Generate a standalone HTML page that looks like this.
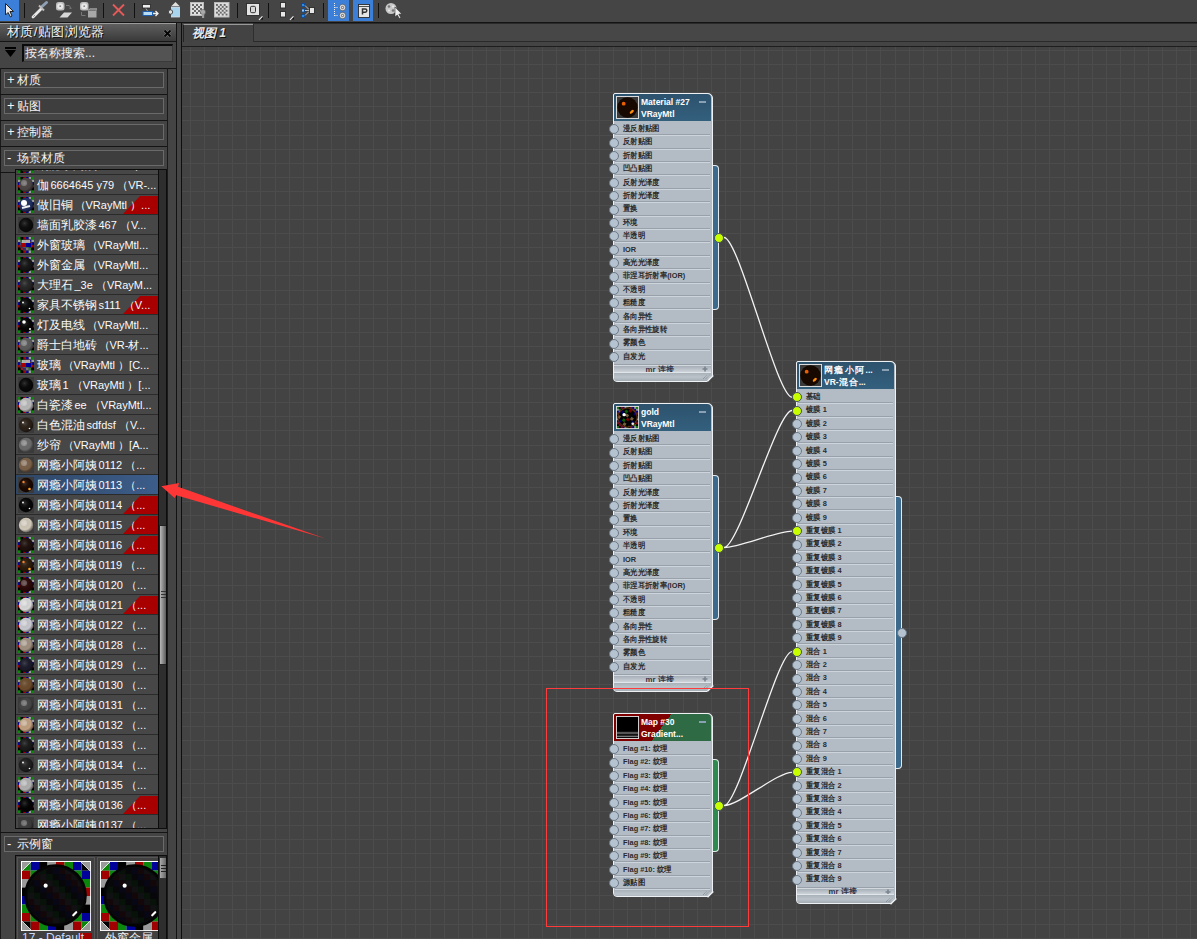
<!DOCTYPE html><html><head><meta charset="utf-8"><style>
*{box-sizing:border-box;margin:0;padding:0}
html,body{width:1197px;height:939px;overflow:hidden;background:#444;font-family:"Liberation Sans",sans-serif}
.a{position:absolute}
.row{position:absolute;left:0;width:142px;height:19px;background:#474747;color:#fafafa;font-size:12px;line-height:19px;white-space:nowrap;overflow:hidden}
.row .t{position:absolute;left:21px;top:1px}
.sec{position:absolute;left:1px;width:166px;height:25px;background:#444}
.secbox{position:absolute;left:3px;top:3px;width:160px;height:16px;border:1px solid #6a6a6a;background:#3e3e3e;color:#f4f4f4;font-size:12px;line-height:14px;white-space:nowrap}
.lb{position:absolute;left:9px;transform:scaleX(0.92);transform-origin:0 50%;font-size:8px;font-weight:bold;color:#2a2a2a;white-space:nowrap}
.sk{position:absolute;width:10px;height:10px;border-radius:50%;background:#b5c2cf;border:1px solid #6b7987}
.sky{position:absolute;width:10px;height:10px;border-radius:50%;background:#c8ff00;border:1px solid #46525c}
</style></head><body>

<svg width="0" height="0" style="position:absolute"><defs><radialGradient id="shade" cx="0.4" cy="0.38" r="0.62"><stop offset="0" stop-color="#fff" stop-opacity="0.18"/><stop offset="0.7" stop-color="#000" stop-opacity="0"/><stop offset="1" stop-color="#000" stop-opacity="0.45"/></radialGradient></defs></svg>
<div class="a" style="left:0;top:0;width:1197px;height:22px;background:#454545"></div>
<div class="a" style="left:0;top:22px;width:1197px;height:1px;background:#141414"></div>
<div class="a" style="left:0px;top:0;width:19px;height:21px;background:#3c7fd8"></div>
<div class="a" style="left:328px;top:0;width:21px;height:21px;background:#3c7fd8"></div>
<div class="a" style="left:353px;top:0;width:20px;height:21px;background:#3c7fd8"></div>
<div class="a" style="left:24px;top:3px;width:1px;height:15px;background:#111"></div>
<div class="a" style="left:103px;top:3px;width:1px;height:15px;background:#111"></div>
<div class="a" style="left:134px;top:3px;width:1px;height:15px;background:#111"></div>
<div class="a" style="left:237px;top:3px;width:1px;height:15px;background:#111"></div>
<div class="a" style="left:268px;top:3px;width:1px;height:15px;background:#111"></div>
<div class="a" style="left:323px;top:3px;width:1px;height:15px;background:#111"></div>
<div class="a" style="left:378px;top:3px;width:1px;height:15px;background:#111"></div>
<svg class="a" style="left:0;top:0" width="420" height="22">
 <path d="M5.5 3.5 L5.5 15 L8 12.5 L10.5 17 L12 16 L10 11.5 L13.5 11.5 Z" fill="#e8e8e8" stroke="#222" stroke-width="1"/>
 <path d="M33 17 L41 9" stroke="#e8e8e8" stroke-width="2.8" stroke-linecap="round"/>
 <path d="M33.3 16.7 L35 15" stroke="#999" stroke-width="1"/>
 <path d="M42 6.5 L46.5 2.5" stroke="#8fa0b5" stroke-width="3" stroke-linecap="round"/>
 <path d="M39 5.5 L44 10.5" stroke="#bdbdbd" stroke-width="2"/>
 <rect x="56" y="2" width="8.5" height="8.5" rx="2.5" fill="#bdbdbd"/><circle cx="60.2" cy="6.2" r="3" fill="#e8e8e8"/><circle cx="60.2" cy="6.2" r="0.9" fill="#888"/>
 <rect x="80" y="2" width="8.5" height="8.5" rx="2.5" fill="#bdbdbd"/><circle cx="84.2" cy="6.2" r="3" fill="#e8e8e8"/><circle cx="84.2" cy="6.2" r="0.9" fill="#888"/>
 <path d="M59.5 17.5 L64 12.5 L72 12.5 L67.5 17.5 Z" fill="#d8d8d8"/>
 <path d="M66 5.5 L69 5.5 Q70.5 6 70.5 8.5 M69.3 7.8 L70.5 9 L71.7 7.8" stroke="#777" fill="none" stroke-width="1"/>
 <path d="M88 10.5 L95.5 10.5 L96.5 9.5 L96.5 17.5 L88 17.5 Z" fill="#a8a8a8"/>
 <path d="M88 10.5 L89.5 9 L97 9" stroke="#cfcfcf" fill="none"/>
 <path d="M81.5 12 L81.5 15.5 L85.5 15.5" stroke="#777" fill="none" stroke-width="1"/>
 <path d="M113 4.5 L124 15.5 M124 4.5 L113 15.5" stroke="#e85a5a" stroke-width="1.8"/>
 <rect x="142.5" y="4.5" width="8" height="3.5" fill="#eee" stroke="#222" stroke-width="0.8"/>
 <path d="M146 8.5 L147.5 11" stroke="#bbb" stroke-width="0.8"/>
 <rect x="143" y="11.5" width="9.5" height="4" fill="#b8dcf4" stroke="#1d5fb0" stroke-width="1"/>
 <path d="M153 13.5 L157.5 13.5 M155.5 11 L158 13.5 L155.5 16" stroke="#f0f0f0" stroke-width="1.3" fill="none"/>
 <path d="M171.5 6 L175.5 2 L179.5 6 Z" fill="#e0e0e0"/>
 <rect x="171.5" y="7" width="8" height="10" fill="#a8d4ee" stroke="#ddd" stroke-width="0.8"/>
 <circle cx="170.5" cy="12" r="2.2" fill="#ddd" stroke="#333" stroke-width="0.8"/>
<rect x="190.5" y="2.5" width="13" height="13" fill="#ddd" stroke="#bbb"/><rect x="192" y="4" width="10" height="10" fill="#e0e0e0"/><rect x="192" y="4" width="2" height="2" fill="#6a6a6a"/><rect x="196" y="4" width="2" height="2" fill="#6a6a6a"/><rect x="200" y="4" width="2" height="2" fill="#6a6a6a"/><rect x="194" y="6" width="2" height="2" fill="#6a6a6a"/><rect x="198" y="6" width="2" height="2" fill="#6a6a6a"/><rect x="192" y="8" width="2" height="2" fill="#6a6a6a"/><rect x="196" y="8" width="2" height="2" fill="#6a6a6a"/><rect x="200" y="8" width="2" height="2" fill="#6a6a6a"/><rect x="194" y="10" width="2" height="2" fill="#6a6a6a"/><rect x="198" y="10" width="2" height="2" fill="#6a6a6a"/><rect x="192" y="12" width="2" height="2" fill="#6a6a6a"/><rect x="196" y="12" width="2" height="2" fill="#6a6a6a"/><rect x="200" y="12" width="2" height="2" fill="#6a6a6a"/><circle cx="203" cy="12" r="2.6" fill="#aaa" stroke="#555" stroke-width="0.5"/><rect x="202" y="13.5" width="2.2" height="4.5" fill="#999"/><rect x="214.5" y="2.5" width="14.5" height="14.5" fill="#ddd" stroke="#bbb"/><rect x="216" y="4" width="11.52" height="11.52" fill="#e0e0e0"/><rect x="216.0" y="4.0" width="1.92" height="1.92" fill="#6a6a6a"/><rect x="219.84" y="4.0" width="1.92" height="1.92" fill="#6a6a6a"/><rect x="223.68" y="4.0" width="1.92" height="1.92" fill="#6a6a6a"/><rect x="217.92" y="5.92" width="1.92" height="1.92" fill="#6a6a6a"/><rect x="221.76" y="5.92" width="1.92" height="1.92" fill="#6a6a6a"/><rect x="225.6" y="5.92" width="1.92" height="1.92" fill="#6a6a6a"/><rect x="216.0" y="7.84" width="1.92" height="1.92" fill="#6a6a6a"/><rect x="219.84" y="7.84" width="1.92" height="1.92" fill="#6a6a6a"/><rect x="223.68" y="7.84" width="1.92" height="1.92" fill="#6a6a6a"/><rect x="217.92" y="9.76" width="1.92" height="1.92" fill="#6a6a6a"/><rect x="221.76" y="9.76" width="1.92" height="1.92" fill="#6a6a6a"/><rect x="225.6" y="9.76" width="1.92" height="1.92" fill="#6a6a6a"/><rect x="216.0" y="11.68" width="1.92" height="1.92" fill="#6a6a6a"/><rect x="219.84" y="11.68" width="1.92" height="1.92" fill="#6a6a6a"/><rect x="223.68" y="11.68" width="1.92" height="1.92" fill="#6a6a6a"/><rect x="217.92" y="13.6" width="1.92" height="1.92" fill="#6a6a6a"/><rect x="221.76" y="13.6" width="1.92" height="1.92" fill="#6a6a6a"/><rect x="225.6" y="13.6" width="1.92" height="1.92" fill="#6a6a6a"/>
 <rect x="246.5" y="3.5" width="13" height="12" fill="#e4e4e4" stroke="#2a2a2a" stroke-width="0.9"/>
 <rect x="250.5" y="6.3" width="5" height="6.4" rx="1.3" fill="#d8d8d8" stroke="#333" stroke-width="1"/>
 <path d="M259 19.5 L263 16 L263 19.5 Z" fill="#111"/><path d="M259 19.8 L262.5 16.3" stroke="#f0f0f0" stroke-width="1.2"/>
 <rect x="280.5" y="2.5" width="5" height="5.5" fill="#e6e6e6" stroke="#2a2a2a" stroke-width="0.9"/><rect x="280.5" y="11.5" width="5" height="5.5" fill="#e6e6e6" stroke="#2a2a2a" stroke-width="0.9"/>
 <path d="M290 19.5 L294 16 L294 19.5 Z" fill="#111"/><path d="M290 19.8 L293.5 16.3" stroke="#f0f0f0" stroke-width="1.2"/>
 <rect x="301.5" y="3.5" width="3" height="3" fill="#2e8ae6" stroke="#0a4a9a" stroke-width="0.9"/><rect x="301.5" y="9" width="3" height="3" fill="#9cc8f0" stroke="#0a4a9a" stroke-width="0.9"/><rect x="301.5" y="14.5" width="3" height="3" fill="#2e8ae6" stroke="#0a4a9a" stroke-width="0.9"/>
 <path d="M305 5.5 L309 9.5 M305 10.5 L309 10.5 M305 15.5 L309 11.5" stroke="#ddd" stroke-width="0.8"/>
 <rect x="309.5" y="7.5" width="5" height="6" fill="#e6e6e6" stroke="#2a2a2a" stroke-width="0.9"/>
 <path d="M334.5 3 L334.5 16.5 M334.5 7.5 L338.5 7.5 M334.5 15.5 L338.5 15.5" stroke="#f0f0f0" stroke-width="1" stroke-dasharray="1 1" fill="none"/>
 <circle cx="342.5" cy="7.5" r="3.2" fill="#e8e8e8" stroke="#333" stroke-width="0.6"/><circle cx="342.5" cy="7.5" r="1.2" fill="none" stroke="#555" stroke-width="0.9"/>
 <circle cx="342.5" cy="15.5" r="3.2" fill="#e8e8e8" stroke="#333" stroke-width="0.6"/><circle cx="342.5" cy="15.5" r="1.2" fill="none" stroke="#555" stroke-width="0.9"/>
 <rect x="358.5" y="4.5" width="11" height="13" fill="#e6e6e6" stroke="#2a2a2a" stroke-width="0.9"/>
 <path d="M358.5 6.5 H369.5" stroke="#2a2a2a" stroke-width="0.8"/>
 <path d="M362.5 14.5 V9 H365.3 Q366.8 9 366.8 10.6 Q366.8 12.2 365.3 12.2 H362.5" fill="none" stroke="#333" stroke-width="1.5"/>
 <circle cx="391" cy="8.5" r="5.5" fill="#c8c8c8"/><circle cx="389" cy="6.5" r="1.3" fill="#777"/><circle cx="393" cy="10.5" r="1.3" fill="#777"/><circle cx="389" cy="10.5" r="1" fill="#eee"/><circle cx="393" cy="6.5" r="1" fill="#eee"/>
 <path d="M395 7 L395 17 L397.3 15 L399.3 18.5 L400.8 17.7 L398.8 14.2 L401.8 14 Z" fill="#f0f0f0" stroke="#333" stroke-width="0.6"/>
</svg>
<div class="a" style="left:0;top:23px;width:176px;height:18px;background:linear-gradient(#5e5e5e,#3a3a3a);border-top:1px solid #9a9a9a"></div>
<div class="a" style="left:7px;top:24px;font-size:13px;line-height:16px;letter-spacing:0.4px;color:#f0f0f0;text-shadow:1px 1px 0 #111;white-space:nowrap">材质/贴图浏览器</div>
<svg class="a" style="left:162px;top:29px" width="11" height="9"><path d="M2.5 1.5 L8.5 7.5 M8.5 1.5 L2.5 7.5" stroke="#8a8a8a" stroke-width="3"/><path d="M2.5 1.5 L8.5 7.5 M8.5 1.5 L2.5 7.5" stroke="#050505" stroke-width="2"/></svg>
<div class="a" style="left:0;top:41px;width:176px;height:1px;background:#151515"></div>
<div class="a" style="left:0;top:42px;width:176px;height:26px;background:#444"></div>
<svg class="a" style="left:4px;top:47px" width="13" height="11"><rect x="1" y="0" width="11" height="2" fill="#000"/><path d="M1 3 L12 3 L6.5 10 Z" fill="#000"/></svg>
<div class="a" style="left:22px;top:44px;width:151px;height:18px;background:#535353;border-top:2px solid #0a0a0a;border-left:2px solid #0a0a0a;border-right:1px solid #3a3a3a;border-bottom:1px solid #3a3a3a"></div>
<div class="a" style="left:25px;top:45px;font-size:12px;line-height:16px;color:#eee;white-space:nowrap">按名称搜索...</div>
<div class="a" style="left:0;top:68px;width:176px;height:1px;background:#151515"></div>
<div class="a" style="left:0;top:68px;width:1px;height:871px;background:#1a1a1a"></div>
<div class="sec" style="top:69px"><div class="secbox"><span class="a" style="left:2px;top:0;font-size:13px">+</span><span class="a" style="left:12px;top:0">材质</span></div></div>
<div class="a" style="left:0;top:94px;width:168px;height:1px;background:#141414"></div>
<div class="sec" style="top:95px"><div class="secbox"><span class="a" style="left:2px;top:0;font-size:13px">+</span><span class="a" style="left:12px;top:0">贴图</span></div></div>
<div class="a" style="left:0;top:120px;width:168px;height:1px;background:#141414"></div>
<div class="sec" style="top:121px"><div class="secbox"><span class="a" style="left:2px;top:0;font-size:13px">+</span><span class="a" style="left:12px;top:0">控制器</span></div></div>
<div class="a" style="left:0;top:146px;width:168px;height:1px;background:#141414"></div>
<div class="sec" style="top:147px"><div class="secbox"><span class="a" style="left:2px;top:0;font-size:13px">-</span><span class="a" style="left:12px;top:0">场景材质</span></div></div>
<div class="a" style="left:0;top:172px;width:168px;height:1px;background:#141414"></div>
<div class="a" style="left:167px;top:68px;width:1px;height:871px;background:#1a1a1a"></div>
<div class="a" style="left:176px;top:23px;width:1px;height:916px;background:#121212"></div>
<div class="a" style="left:177px;top:23px;width:4px;height:916px;background:#464646"></div>
<div class="a" style="left:181px;top:23px;width:1px;height:916px;background:#0e0e0e"></div>
<div class="a" style="left:15px;top:169px;width:152px;height:660px;background:#2a2a2a;border:1px solid #0d0d0d;overflow:hidden">
<div class="row" style="top:-15px"><svg class="a" style="left:2px;top:2px" width="16" height="16"><rect width="16" height="16" fill="#000"/><rect x="0.00" y="0.00" width="2.7" height="2.7" fill="#0b870b"/><rect x="2.67" y="0.00" width="2.7" height="2.7" fill="#000"/><rect x="5.33" y="0.00" width="2.7" height="2.7" fill="#a00000"/><rect x="8.00" y="0.00" width="2.7" height="2.7" fill="#00009a"/><rect x="10.67" y="0.00" width="2.7" height="2.7" fill="#9a9a9a"/><rect x="13.33" y="0.00" width="2.7" height="2.7" fill="#0b870b"/><rect x="0.00" y="2.67" width="2.7" height="2.7" fill="#9a9a9a"/><rect x="2.67" y="2.67" width="2.7" height="2.7" fill="#0b870b"/><rect x="5.33" y="2.67" width="2.7" height="2.7" fill="#000"/><rect x="8.00" y="2.67" width="2.7" height="2.7" fill="#a00000"/><rect x="10.67" y="2.67" width="2.7" height="2.7" fill="#00009a"/><rect x="13.33" y="2.67" width="2.7" height="2.7" fill="#9a9a9a"/><rect x="0.00" y="5.33" width="2.7" height="2.7" fill="#00009a"/><rect x="2.67" y="5.33" width="2.7" height="2.7" fill="#9a9a9a"/><rect x="5.33" y="5.33" width="2.7" height="2.7" fill="#0b870b"/><rect x="8.00" y="5.33" width="2.7" height="2.7" fill="#000"/><rect x="10.67" y="5.33" width="2.7" height="2.7" fill="#a00000"/><rect x="13.33" y="5.33" width="2.7" height="2.7" fill="#00009a"/><rect x="0.00" y="8.00" width="2.7" height="2.7" fill="#a00000"/><rect x="2.67" y="8.00" width="2.7" height="2.7" fill="#00009a"/><rect x="5.33" y="8.00" width="2.7" height="2.7" fill="#9a9a9a"/><rect x="8.00" y="8.00" width="2.7" height="2.7" fill="#0b870b"/><rect x="10.67" y="8.00" width="2.7" height="2.7" fill="#000"/><rect x="13.33" y="8.00" width="2.7" height="2.7" fill="#a00000"/><rect x="0.00" y="10.67" width="2.7" height="2.7" fill="#000"/><rect x="2.67" y="10.67" width="2.7" height="2.7" fill="#a00000"/><rect x="5.33" y="10.67" width="2.7" height="2.7" fill="#00009a"/><rect x="8.00" y="10.67" width="2.7" height="2.7" fill="#9a9a9a"/><rect x="10.67" y="10.67" width="2.7" height="2.7" fill="#0b870b"/><rect x="13.33" y="10.67" width="2.7" height="2.7" fill="#000"/><rect x="0.00" y="13.33" width="2.7" height="2.7" fill="#0b870b"/><rect x="2.67" y="13.33" width="2.7" height="2.7" fill="#000"/><rect x="5.33" y="13.33" width="2.7" height="2.7" fill="#a00000"/><rect x="8.00" y="13.33" width="2.7" height="2.7" fill="#00009a"/><rect x="10.67" y="13.33" width="2.7" height="2.7" fill="#9a9a9a"/><rect x="13.33" y="13.33" width="2.7" height="2.7" fill="#0b870b"/><circle cx="8" cy="8" r="7.2" fill="#333"/><circle cx="8" cy="8" r="7.2" fill="url(#shade)"/></svg><span class="t">網瘾小阿姨0109 （...</span></div>
<div class="row" style="top:5px;background:#474747">
<svg class="a" style="left:2px;top:2px" width="16" height="16"><rect width="16" height="16" fill="#000"/><rect x="0.00" y="0.00" width="2.7" height="2.7" fill="#0b870b"/><rect x="2.67" y="0.00" width="2.7" height="2.7" fill="#000"/><rect x="5.33" y="0.00" width="2.7" height="2.7" fill="#a00000"/><rect x="8.00" y="0.00" width="2.7" height="2.7" fill="#00009a"/><rect x="10.67" y="0.00" width="2.7" height="2.7" fill="#9a9a9a"/><rect x="13.33" y="0.00" width="2.7" height="2.7" fill="#0b870b"/><rect x="0.00" y="2.67" width="2.7" height="2.7" fill="#9a9a9a"/><rect x="2.67" y="2.67" width="2.7" height="2.7" fill="#0b870b"/><rect x="5.33" y="2.67" width="2.7" height="2.7" fill="#000"/><rect x="8.00" y="2.67" width="2.7" height="2.7" fill="#a00000"/><rect x="10.67" y="2.67" width="2.7" height="2.7" fill="#00009a"/><rect x="13.33" y="2.67" width="2.7" height="2.7" fill="#9a9a9a"/><rect x="0.00" y="5.33" width="2.7" height="2.7" fill="#00009a"/><rect x="2.67" y="5.33" width="2.7" height="2.7" fill="#9a9a9a"/><rect x="5.33" y="5.33" width="2.7" height="2.7" fill="#0b870b"/><rect x="8.00" y="5.33" width="2.7" height="2.7" fill="#000"/><rect x="10.67" y="5.33" width="2.7" height="2.7" fill="#a00000"/><rect x="13.33" y="5.33" width="2.7" height="2.7" fill="#00009a"/><rect x="0.00" y="8.00" width="2.7" height="2.7" fill="#a00000"/><rect x="2.67" y="8.00" width="2.7" height="2.7" fill="#00009a"/><rect x="5.33" y="8.00" width="2.7" height="2.7" fill="#9a9a9a"/><rect x="8.00" y="8.00" width="2.7" height="2.7" fill="#0b870b"/><rect x="10.67" y="8.00" width="2.7" height="2.7" fill="#000"/><rect x="13.33" y="8.00" width="2.7" height="2.7" fill="#a00000"/><rect x="0.00" y="10.67" width="2.7" height="2.7" fill="#000"/><rect x="2.67" y="10.67" width="2.7" height="2.7" fill="#a00000"/><rect x="5.33" y="10.67" width="2.7" height="2.7" fill="#00009a"/><rect x="8.00" y="10.67" width="2.7" height="2.7" fill="#9a9a9a"/><rect x="10.67" y="10.67" width="2.7" height="2.7" fill="#0b870b"/><rect x="13.33" y="10.67" width="2.7" height="2.7" fill="#000"/><rect x="0.00" y="13.33" width="2.7" height="2.7" fill="#0b870b"/><rect x="2.67" y="13.33" width="2.7" height="2.7" fill="#000"/><rect x="5.33" y="13.33" width="2.7" height="2.7" fill="#a00000"/><rect x="8.00" y="13.33" width="2.7" height="2.7" fill="#00009a"/><rect x="10.67" y="13.33" width="2.7" height="2.7" fill="#9a9a9a"/><rect x="13.33" y="13.33" width="2.7" height="2.7" fill="#0b870b"/><circle cx="8" cy="8" r="7.2" fill="#4a4444"/><circle cx="8" cy="8" r="7.2" fill="url(#shade)"/><circle cx="6" cy="6" r="3" fill="#fff" opacity="0.25"/></svg>
<span class="t">伽<span style="font-size:11px;padding-left:1.5px">6664645 y79 （VR-...</span></span>
</div>
<div class="row" style="top:25px;background:#474747">
<svg class="a" style="left:107px;top:1px" width="35" height="18"><path d="M17 0 L35 0 L35 18 L0 18 Z" fill="#a80000"/></svg>
<svg class="a" style="left:2px;top:2px" width="16" height="16"><rect width="16" height="16" fill="#000"/><rect x="0.00" y="0.00" width="2.7" height="2.7" fill="#0b870b"/><rect x="2.67" y="0.00" width="2.7" height="2.7" fill="#000"/><rect x="5.33" y="0.00" width="2.7" height="2.7" fill="#a00000"/><rect x="8.00" y="0.00" width="2.7" height="2.7" fill="#00009a"/><rect x="10.67" y="0.00" width="2.7" height="2.7" fill="#9a9a9a"/><rect x="13.33" y="0.00" width="2.7" height="2.7" fill="#0b870b"/><rect x="0.00" y="2.67" width="2.7" height="2.7" fill="#9a9a9a"/><rect x="2.67" y="2.67" width="2.7" height="2.7" fill="#0b870b"/><rect x="5.33" y="2.67" width="2.7" height="2.7" fill="#000"/><rect x="8.00" y="2.67" width="2.7" height="2.7" fill="#a00000"/><rect x="10.67" y="2.67" width="2.7" height="2.7" fill="#00009a"/><rect x="13.33" y="2.67" width="2.7" height="2.7" fill="#9a9a9a"/><rect x="0.00" y="5.33" width="2.7" height="2.7" fill="#00009a"/><rect x="2.67" y="5.33" width="2.7" height="2.7" fill="#9a9a9a"/><rect x="5.33" y="5.33" width="2.7" height="2.7" fill="#0b870b"/><rect x="8.00" y="5.33" width="2.7" height="2.7" fill="#000"/><rect x="10.67" y="5.33" width="2.7" height="2.7" fill="#a00000"/><rect x="13.33" y="5.33" width="2.7" height="2.7" fill="#00009a"/><rect x="0.00" y="8.00" width="2.7" height="2.7" fill="#a00000"/><rect x="2.67" y="8.00" width="2.7" height="2.7" fill="#00009a"/><rect x="5.33" y="8.00" width="2.7" height="2.7" fill="#9a9a9a"/><rect x="8.00" y="8.00" width="2.7" height="2.7" fill="#0b870b"/><rect x="10.67" y="8.00" width="2.7" height="2.7" fill="#000"/><rect x="13.33" y="8.00" width="2.7" height="2.7" fill="#a00000"/><rect x="0.00" y="10.67" width="2.7" height="2.7" fill="#000"/><rect x="2.67" y="10.67" width="2.7" height="2.7" fill="#a00000"/><rect x="5.33" y="10.67" width="2.7" height="2.7" fill="#00009a"/><rect x="8.00" y="10.67" width="2.7" height="2.7" fill="#9a9a9a"/><rect x="10.67" y="10.67" width="2.7" height="2.7" fill="#0b870b"/><rect x="13.33" y="10.67" width="2.7" height="2.7" fill="#000"/><rect x="0.00" y="13.33" width="2.7" height="2.7" fill="#0b870b"/><rect x="2.67" y="13.33" width="2.7" height="2.7" fill="#000"/><rect x="5.33" y="13.33" width="2.7" height="2.7" fill="#a00000"/><rect x="8.00" y="13.33" width="2.7" height="2.7" fill="#00009a"/><rect x="10.67" y="13.33" width="2.7" height="2.7" fill="#9a9a9a"/><rect x="13.33" y="13.33" width="2.7" height="2.7" fill="#0b870b"/><circle cx="8" cy="8" r="7.2" fill="#203060"/><circle cx="8" cy="8" r="7.2" fill="url(#shade)"/><circle cx="6" cy="6" r="3" fill="#fff"/><path d="M4 11 L12 9" stroke="#eee" stroke-width="2"/></svg>
<span class="t">做旧铜<span style="font-size:11px;padding-left:1.5px">（VRayMtl ）...</span></span>
</div>
<div class="row" style="top:45px;background:#474747">
<svg class="a" style="left:2px;top:2px" width="16" height="16"><rect width="16" height="16" fill="#3a3a3a"/><circle cx="8" cy="8" r="7.2" fill="#0c0c0c"/><circle cx="8" cy="8" r="7.2" fill="url(#shade)"/></svg>
<span class="t">墙面乳胶漆<span style="font-size:11px;padding-left:1.5px">467 （V...</span></span>
</div>
<div class="row" style="top:65px;background:#474747">
<svg class="a" style="left:2px;top:2px" width="16" height="16"><rect width="16" height="16" fill="#000"/><rect x="0.00" y="0.00" width="2.7" height="2.7" fill="#0b870b"/><rect x="2.67" y="0.00" width="2.7" height="2.7" fill="#000"/><rect x="5.33" y="0.00" width="2.7" height="2.7" fill="#a00000"/><rect x="8.00" y="0.00" width="2.7" height="2.7" fill="#00009a"/><rect x="10.67" y="0.00" width="2.7" height="2.7" fill="#9a9a9a"/><rect x="13.33" y="0.00" width="2.7" height="2.7" fill="#0b870b"/><rect x="0.00" y="2.67" width="2.7" height="2.7" fill="#9a9a9a"/><rect x="2.67" y="2.67" width="2.7" height="2.7" fill="#0b870b"/><rect x="5.33" y="2.67" width="2.7" height="2.7" fill="#000"/><rect x="8.00" y="2.67" width="2.7" height="2.7" fill="#a00000"/><rect x="10.67" y="2.67" width="2.7" height="2.7" fill="#00009a"/><rect x="13.33" y="2.67" width="2.7" height="2.7" fill="#9a9a9a"/><rect x="0.00" y="5.33" width="2.7" height="2.7" fill="#00009a"/><rect x="2.67" y="5.33" width="2.7" height="2.7" fill="#9a9a9a"/><rect x="5.33" y="5.33" width="2.7" height="2.7" fill="#0b870b"/><rect x="8.00" y="5.33" width="2.7" height="2.7" fill="#000"/><rect x="10.67" y="5.33" width="2.7" height="2.7" fill="#a00000"/><rect x="13.33" y="5.33" width="2.7" height="2.7" fill="#00009a"/><rect x="0.00" y="8.00" width="2.7" height="2.7" fill="#a00000"/><rect x="2.67" y="8.00" width="2.7" height="2.7" fill="#00009a"/><rect x="5.33" y="8.00" width="2.7" height="2.7" fill="#9a9a9a"/><rect x="8.00" y="8.00" width="2.7" height="2.7" fill="#0b870b"/><rect x="10.67" y="8.00" width="2.7" height="2.7" fill="#000"/><rect x="13.33" y="8.00" width="2.7" height="2.7" fill="#a00000"/><rect x="0.00" y="10.67" width="2.7" height="2.7" fill="#000"/><rect x="2.67" y="10.67" width="2.7" height="2.7" fill="#a00000"/><rect x="5.33" y="10.67" width="2.7" height="2.7" fill="#00009a"/><rect x="8.00" y="10.67" width="2.7" height="2.7" fill="#9a9a9a"/><rect x="10.67" y="10.67" width="2.7" height="2.7" fill="#0b870b"/><rect x="13.33" y="10.67" width="2.7" height="2.7" fill="#000"/><rect x="0.00" y="13.33" width="2.7" height="2.7" fill="#0b870b"/><rect x="2.67" y="13.33" width="2.7" height="2.7" fill="#000"/><rect x="5.33" y="13.33" width="2.7" height="2.7" fill="#a00000"/><rect x="8.00" y="13.33" width="2.7" height="2.7" fill="#00009a"/><rect x="10.67" y="13.33" width="2.7" height="2.7" fill="#9a9a9a"/><rect x="13.33" y="13.33" width="2.7" height="2.7" fill="#0b870b"/><circle cx="8" cy="8" r="6.5" fill="#555" opacity="0.5"/><rect x="3" y="6" width="5" height="4" fill="#a00"/><rect x="8" y="6" width="5" height="4" fill="#009"/><rect x="4" y="3" width="8" height="3" fill="#ddd" opacity="0.7"/></svg>
<span class="t">外窗玻璃<span style="font-size:11px;padding-left:1.5px">（VRayMtl...</span></span>
</div>
<div class="row" style="top:85px;background:#474747">
<svg class="a" style="left:2px;top:2px" width="16" height="16"><rect width="16" height="16" fill="#000"/><rect x="0.00" y="0.00" width="2.7" height="2.7" fill="#0b870b"/><rect x="2.67" y="0.00" width="2.7" height="2.7" fill="#000"/><rect x="5.33" y="0.00" width="2.7" height="2.7" fill="#a00000"/><rect x="8.00" y="0.00" width="2.7" height="2.7" fill="#00009a"/><rect x="10.67" y="0.00" width="2.7" height="2.7" fill="#9a9a9a"/><rect x="13.33" y="0.00" width="2.7" height="2.7" fill="#0b870b"/><rect x="0.00" y="2.67" width="2.7" height="2.7" fill="#9a9a9a"/><rect x="2.67" y="2.67" width="2.7" height="2.7" fill="#0b870b"/><rect x="5.33" y="2.67" width="2.7" height="2.7" fill="#000"/><rect x="8.00" y="2.67" width="2.7" height="2.7" fill="#a00000"/><rect x="10.67" y="2.67" width="2.7" height="2.7" fill="#00009a"/><rect x="13.33" y="2.67" width="2.7" height="2.7" fill="#9a9a9a"/><rect x="0.00" y="5.33" width="2.7" height="2.7" fill="#00009a"/><rect x="2.67" y="5.33" width="2.7" height="2.7" fill="#9a9a9a"/><rect x="5.33" y="5.33" width="2.7" height="2.7" fill="#0b870b"/><rect x="8.00" y="5.33" width="2.7" height="2.7" fill="#000"/><rect x="10.67" y="5.33" width="2.7" height="2.7" fill="#a00000"/><rect x="13.33" y="5.33" width="2.7" height="2.7" fill="#00009a"/><rect x="0.00" y="8.00" width="2.7" height="2.7" fill="#a00000"/><rect x="2.67" y="8.00" width="2.7" height="2.7" fill="#00009a"/><rect x="5.33" y="8.00" width="2.7" height="2.7" fill="#9a9a9a"/><rect x="8.00" y="8.00" width="2.7" height="2.7" fill="#0b870b"/><rect x="10.67" y="8.00" width="2.7" height="2.7" fill="#000"/><rect x="13.33" y="8.00" width="2.7" height="2.7" fill="#a00000"/><rect x="0.00" y="10.67" width="2.7" height="2.7" fill="#000"/><rect x="2.67" y="10.67" width="2.7" height="2.7" fill="#a00000"/><rect x="5.33" y="10.67" width="2.7" height="2.7" fill="#00009a"/><rect x="8.00" y="10.67" width="2.7" height="2.7" fill="#9a9a9a"/><rect x="10.67" y="10.67" width="2.7" height="2.7" fill="#0b870b"/><rect x="13.33" y="10.67" width="2.7" height="2.7" fill="#000"/><rect x="0.00" y="13.33" width="2.7" height="2.7" fill="#0b870b"/><rect x="2.67" y="13.33" width="2.7" height="2.7" fill="#000"/><rect x="5.33" y="13.33" width="2.7" height="2.7" fill="#a00000"/><rect x="8.00" y="13.33" width="2.7" height="2.7" fill="#00009a"/><rect x="10.67" y="13.33" width="2.7" height="2.7" fill="#9a9a9a"/><rect x="13.33" y="13.33" width="2.7" height="2.7" fill="#0b870b"/><circle cx="8" cy="8" r="7.2" fill="#151515"/><circle cx="8" cy="8" r="7.2" fill="url(#shade)"/></svg>
<span class="t">外窗金属<span style="font-size:11px;padding-left:1.5px">（VRayMtl...</span></span>
</div>
<div class="row" style="top:105px;background:#474747">
<svg class="a" style="left:2px;top:2px" width="16" height="16"><rect width="16" height="16" fill="#000"/><rect x="0.00" y="0.00" width="2.7" height="2.7" fill="#0b870b"/><rect x="2.67" y="0.00" width="2.7" height="2.7" fill="#000"/><rect x="5.33" y="0.00" width="2.7" height="2.7" fill="#a00000"/><rect x="8.00" y="0.00" width="2.7" height="2.7" fill="#00009a"/><rect x="10.67" y="0.00" width="2.7" height="2.7" fill="#9a9a9a"/><rect x="13.33" y="0.00" width="2.7" height="2.7" fill="#0b870b"/><rect x="0.00" y="2.67" width="2.7" height="2.7" fill="#9a9a9a"/><rect x="2.67" y="2.67" width="2.7" height="2.7" fill="#0b870b"/><rect x="5.33" y="2.67" width="2.7" height="2.7" fill="#000"/><rect x="8.00" y="2.67" width="2.7" height="2.7" fill="#a00000"/><rect x="10.67" y="2.67" width="2.7" height="2.7" fill="#00009a"/><rect x="13.33" y="2.67" width="2.7" height="2.7" fill="#9a9a9a"/><rect x="0.00" y="5.33" width="2.7" height="2.7" fill="#00009a"/><rect x="2.67" y="5.33" width="2.7" height="2.7" fill="#9a9a9a"/><rect x="5.33" y="5.33" width="2.7" height="2.7" fill="#0b870b"/><rect x="8.00" y="5.33" width="2.7" height="2.7" fill="#000"/><rect x="10.67" y="5.33" width="2.7" height="2.7" fill="#a00000"/><rect x="13.33" y="5.33" width="2.7" height="2.7" fill="#00009a"/><rect x="0.00" y="8.00" width="2.7" height="2.7" fill="#a00000"/><rect x="2.67" y="8.00" width="2.7" height="2.7" fill="#00009a"/><rect x="5.33" y="8.00" width="2.7" height="2.7" fill="#9a9a9a"/><rect x="8.00" y="8.00" width="2.7" height="2.7" fill="#0b870b"/><rect x="10.67" y="8.00" width="2.7" height="2.7" fill="#000"/><rect x="13.33" y="8.00" width="2.7" height="2.7" fill="#a00000"/><rect x="0.00" y="10.67" width="2.7" height="2.7" fill="#000"/><rect x="2.67" y="10.67" width="2.7" height="2.7" fill="#a00000"/><rect x="5.33" y="10.67" width="2.7" height="2.7" fill="#00009a"/><rect x="8.00" y="10.67" width="2.7" height="2.7" fill="#9a9a9a"/><rect x="10.67" y="10.67" width="2.7" height="2.7" fill="#0b870b"/><rect x="13.33" y="10.67" width="2.7" height="2.7" fill="#000"/><rect x="0.00" y="13.33" width="2.7" height="2.7" fill="#0b870b"/><rect x="2.67" y="13.33" width="2.7" height="2.7" fill="#000"/><rect x="5.33" y="13.33" width="2.7" height="2.7" fill="#a00000"/><rect x="8.00" y="13.33" width="2.7" height="2.7" fill="#00009a"/><rect x="10.67" y="13.33" width="2.7" height="2.7" fill="#9a9a9a"/><rect x="13.33" y="13.33" width="2.7" height="2.7" fill="#0b870b"/><circle cx="8" cy="8" r="7.2" fill="#252525"/><circle cx="8" cy="8" r="7.2" fill="url(#shade)"/></svg>
<span class="t">大理石<span style="font-size:11px;padding-left:1.5px">_3e （VRayM...</span></span>
</div>
<div class="row" style="top:125px;background:#474747">
<svg class="a" style="left:107px;top:1px" width="35" height="18"><path d="M17 0 L35 0 L35 18 L0 18 Z" fill="#a80000"/></svg>
<svg class="a" style="left:2px;top:2px" width="16" height="16"><rect width="16" height="16" fill="#000"/><rect x="0.00" y="0.00" width="2.7" height="2.7" fill="#0b870b"/><rect x="2.67" y="0.00" width="2.7" height="2.7" fill="#000"/><rect x="5.33" y="0.00" width="2.7" height="2.7" fill="#a00000"/><rect x="8.00" y="0.00" width="2.7" height="2.7" fill="#00009a"/><rect x="10.67" y="0.00" width="2.7" height="2.7" fill="#9a9a9a"/><rect x="13.33" y="0.00" width="2.7" height="2.7" fill="#0b870b"/><rect x="0.00" y="2.67" width="2.7" height="2.7" fill="#9a9a9a"/><rect x="2.67" y="2.67" width="2.7" height="2.7" fill="#0b870b"/><rect x="5.33" y="2.67" width="2.7" height="2.7" fill="#000"/><rect x="8.00" y="2.67" width="2.7" height="2.7" fill="#a00000"/><rect x="10.67" y="2.67" width="2.7" height="2.7" fill="#00009a"/><rect x="13.33" y="2.67" width="2.7" height="2.7" fill="#9a9a9a"/><rect x="0.00" y="5.33" width="2.7" height="2.7" fill="#00009a"/><rect x="2.67" y="5.33" width="2.7" height="2.7" fill="#9a9a9a"/><rect x="5.33" y="5.33" width="2.7" height="2.7" fill="#0b870b"/><rect x="8.00" y="5.33" width="2.7" height="2.7" fill="#000"/><rect x="10.67" y="5.33" width="2.7" height="2.7" fill="#a00000"/><rect x="13.33" y="5.33" width="2.7" height="2.7" fill="#00009a"/><rect x="0.00" y="8.00" width="2.7" height="2.7" fill="#a00000"/><rect x="2.67" y="8.00" width="2.7" height="2.7" fill="#00009a"/><rect x="5.33" y="8.00" width="2.7" height="2.7" fill="#9a9a9a"/><rect x="8.00" y="8.00" width="2.7" height="2.7" fill="#0b870b"/><rect x="10.67" y="8.00" width="2.7" height="2.7" fill="#000"/><rect x="13.33" y="8.00" width="2.7" height="2.7" fill="#a00000"/><rect x="0.00" y="10.67" width="2.7" height="2.7" fill="#000"/><rect x="2.67" y="10.67" width="2.7" height="2.7" fill="#a00000"/><rect x="5.33" y="10.67" width="2.7" height="2.7" fill="#00009a"/><rect x="8.00" y="10.67" width="2.7" height="2.7" fill="#9a9a9a"/><rect x="10.67" y="10.67" width="2.7" height="2.7" fill="#0b870b"/><rect x="13.33" y="10.67" width="2.7" height="2.7" fill="#000"/><rect x="0.00" y="13.33" width="2.7" height="2.7" fill="#0b870b"/><rect x="2.67" y="13.33" width="2.7" height="2.7" fill="#000"/><rect x="5.33" y="13.33" width="2.7" height="2.7" fill="#a00000"/><rect x="8.00" y="13.33" width="2.7" height="2.7" fill="#00009a"/><rect x="10.67" y="13.33" width="2.7" height="2.7" fill="#9a9a9a"/><rect x="13.33" y="13.33" width="2.7" height="2.7" fill="#0b870b"/><circle cx="8" cy="8" r="7.2" fill="#080808"/><circle cx="8" cy="8" r="7.2" fill="url(#shade)"/><circle cx="5" cy="5.5" r="0.9" fill="#fff"/><circle cx="11.5" cy="11.5" r="0.8" fill="#fff"/></svg>
<span class="t">家具不锈钢<span style="font-size:11px;padding-left:1.5px">s111 （V...</span></span>
</div>
<div class="row" style="top:145px;background:#474747">
<svg class="a" style="left:2px;top:2px" width="16" height="16"><rect width="16" height="16" fill="#000"/><rect x="0.00" y="0.00" width="2.7" height="2.7" fill="#0b870b"/><rect x="2.67" y="0.00" width="2.7" height="2.7" fill="#000"/><rect x="5.33" y="0.00" width="2.7" height="2.7" fill="#a00000"/><rect x="8.00" y="0.00" width="2.7" height="2.7" fill="#00009a"/><rect x="10.67" y="0.00" width="2.7" height="2.7" fill="#9a9a9a"/><rect x="13.33" y="0.00" width="2.7" height="2.7" fill="#0b870b"/><rect x="0.00" y="2.67" width="2.7" height="2.7" fill="#9a9a9a"/><rect x="2.67" y="2.67" width="2.7" height="2.7" fill="#0b870b"/><rect x="5.33" y="2.67" width="2.7" height="2.7" fill="#000"/><rect x="8.00" y="2.67" width="2.7" height="2.7" fill="#a00000"/><rect x="10.67" y="2.67" width="2.7" height="2.7" fill="#00009a"/><rect x="13.33" y="2.67" width="2.7" height="2.7" fill="#9a9a9a"/><rect x="0.00" y="5.33" width="2.7" height="2.7" fill="#00009a"/><rect x="2.67" y="5.33" width="2.7" height="2.7" fill="#9a9a9a"/><rect x="5.33" y="5.33" width="2.7" height="2.7" fill="#0b870b"/><rect x="8.00" y="5.33" width="2.7" height="2.7" fill="#000"/><rect x="10.67" y="5.33" width="2.7" height="2.7" fill="#a00000"/><rect x="13.33" y="5.33" width="2.7" height="2.7" fill="#00009a"/><rect x="0.00" y="8.00" width="2.7" height="2.7" fill="#a00000"/><rect x="2.67" y="8.00" width="2.7" height="2.7" fill="#00009a"/><rect x="5.33" y="8.00" width="2.7" height="2.7" fill="#9a9a9a"/><rect x="8.00" y="8.00" width="2.7" height="2.7" fill="#0b870b"/><rect x="10.67" y="8.00" width="2.7" height="2.7" fill="#000"/><rect x="13.33" y="8.00" width="2.7" height="2.7" fill="#a00000"/><rect x="0.00" y="10.67" width="2.7" height="2.7" fill="#000"/><rect x="2.67" y="10.67" width="2.7" height="2.7" fill="#a00000"/><rect x="5.33" y="10.67" width="2.7" height="2.7" fill="#00009a"/><rect x="8.00" y="10.67" width="2.7" height="2.7" fill="#9a9a9a"/><rect x="10.67" y="10.67" width="2.7" height="2.7" fill="#0b870b"/><rect x="13.33" y="10.67" width="2.7" height="2.7" fill="#000"/><rect x="0.00" y="13.33" width="2.7" height="2.7" fill="#0b870b"/><rect x="2.67" y="13.33" width="2.7" height="2.7" fill="#000"/><rect x="5.33" y="13.33" width="2.7" height="2.7" fill="#a00000"/><rect x="8.00" y="13.33" width="2.7" height="2.7" fill="#00009a"/><rect x="10.67" y="13.33" width="2.7" height="2.7" fill="#9a9a9a"/><rect x="13.33" y="13.33" width="2.7" height="2.7" fill="#0b870b"/><circle cx="8" cy="8" r="7.2" fill="#050505"/><circle cx="8" cy="8" r="7.2" fill="url(#shade)"/><circle cx="6" cy="5" r="1.8" fill="#fff"/><circle cx="12" cy="12" r="1" fill="#fff"/></svg>
<span class="t">灯及电线<span style="font-size:11px;padding-left:1.5px">（VRayMtl...</span></span>
</div>
<div class="row" style="top:165px;background:#474747">
<svg class="a" style="left:2px;top:2px" width="16" height="16"><rect width="16" height="16" fill="#000"/><rect x="0.00" y="0.00" width="2.7" height="2.7" fill="#0b870b"/><rect x="2.67" y="0.00" width="2.7" height="2.7" fill="#000"/><rect x="5.33" y="0.00" width="2.7" height="2.7" fill="#a00000"/><rect x="8.00" y="0.00" width="2.7" height="2.7" fill="#00009a"/><rect x="10.67" y="0.00" width="2.7" height="2.7" fill="#9a9a9a"/><rect x="13.33" y="0.00" width="2.7" height="2.7" fill="#0b870b"/><rect x="0.00" y="2.67" width="2.7" height="2.7" fill="#9a9a9a"/><rect x="2.67" y="2.67" width="2.7" height="2.7" fill="#0b870b"/><rect x="5.33" y="2.67" width="2.7" height="2.7" fill="#000"/><rect x="8.00" y="2.67" width="2.7" height="2.7" fill="#a00000"/><rect x="10.67" y="2.67" width="2.7" height="2.7" fill="#00009a"/><rect x="13.33" y="2.67" width="2.7" height="2.7" fill="#9a9a9a"/><rect x="0.00" y="5.33" width="2.7" height="2.7" fill="#00009a"/><rect x="2.67" y="5.33" width="2.7" height="2.7" fill="#9a9a9a"/><rect x="5.33" y="5.33" width="2.7" height="2.7" fill="#0b870b"/><rect x="8.00" y="5.33" width="2.7" height="2.7" fill="#000"/><rect x="10.67" y="5.33" width="2.7" height="2.7" fill="#a00000"/><rect x="13.33" y="5.33" width="2.7" height="2.7" fill="#00009a"/><rect x="0.00" y="8.00" width="2.7" height="2.7" fill="#a00000"/><rect x="2.67" y="8.00" width="2.7" height="2.7" fill="#00009a"/><rect x="5.33" y="8.00" width="2.7" height="2.7" fill="#9a9a9a"/><rect x="8.00" y="8.00" width="2.7" height="2.7" fill="#0b870b"/><rect x="10.67" y="8.00" width="2.7" height="2.7" fill="#000"/><rect x="13.33" y="8.00" width="2.7" height="2.7" fill="#a00000"/><rect x="0.00" y="10.67" width="2.7" height="2.7" fill="#000"/><rect x="2.67" y="10.67" width="2.7" height="2.7" fill="#a00000"/><rect x="5.33" y="10.67" width="2.7" height="2.7" fill="#00009a"/><rect x="8.00" y="10.67" width="2.7" height="2.7" fill="#9a9a9a"/><rect x="10.67" y="10.67" width="2.7" height="2.7" fill="#0b870b"/><rect x="13.33" y="10.67" width="2.7" height="2.7" fill="#000"/><rect x="0.00" y="13.33" width="2.7" height="2.7" fill="#0b870b"/><rect x="2.67" y="13.33" width="2.7" height="2.7" fill="#000"/><rect x="5.33" y="13.33" width="2.7" height="2.7" fill="#a00000"/><rect x="8.00" y="13.33" width="2.7" height="2.7" fill="#00009a"/><rect x="10.67" y="13.33" width="2.7" height="2.7" fill="#9a9a9a"/><rect x="13.33" y="13.33" width="2.7" height="2.7" fill="#0b870b"/><circle cx="8" cy="8" r="7.2" fill="#5a5a5a"/><circle cx="8" cy="8" r="7.2" fill="url(#shade)"/><circle cx="6" cy="6" r="3" fill="#fff" opacity="0.25"/></svg>
<span class="t">爵士白地砖<span style="font-size:11px;padding-left:1.5px">（VR-材...</span></span>
</div>
<div class="row" style="top:185px;background:#474747">
<svg class="a" style="left:2px;top:2px" width="16" height="16"><rect width="16" height="16" fill="#000"/><rect x="0.00" y="0.00" width="2.7" height="2.7" fill="#0b870b"/><rect x="2.67" y="0.00" width="2.7" height="2.7" fill="#000"/><rect x="5.33" y="0.00" width="2.7" height="2.7" fill="#a00000"/><rect x="8.00" y="0.00" width="2.7" height="2.7" fill="#00009a"/><rect x="10.67" y="0.00" width="2.7" height="2.7" fill="#9a9a9a"/><rect x="13.33" y="0.00" width="2.7" height="2.7" fill="#0b870b"/><rect x="0.00" y="2.67" width="2.7" height="2.7" fill="#9a9a9a"/><rect x="2.67" y="2.67" width="2.7" height="2.7" fill="#0b870b"/><rect x="5.33" y="2.67" width="2.7" height="2.7" fill="#000"/><rect x="8.00" y="2.67" width="2.7" height="2.7" fill="#a00000"/><rect x="10.67" y="2.67" width="2.7" height="2.7" fill="#00009a"/><rect x="13.33" y="2.67" width="2.7" height="2.7" fill="#9a9a9a"/><rect x="0.00" y="5.33" width="2.7" height="2.7" fill="#00009a"/><rect x="2.67" y="5.33" width="2.7" height="2.7" fill="#9a9a9a"/><rect x="5.33" y="5.33" width="2.7" height="2.7" fill="#0b870b"/><rect x="8.00" y="5.33" width="2.7" height="2.7" fill="#000"/><rect x="10.67" y="5.33" width="2.7" height="2.7" fill="#a00000"/><rect x="13.33" y="5.33" width="2.7" height="2.7" fill="#00009a"/><rect x="0.00" y="8.00" width="2.7" height="2.7" fill="#a00000"/><rect x="2.67" y="8.00" width="2.7" height="2.7" fill="#00009a"/><rect x="5.33" y="8.00" width="2.7" height="2.7" fill="#9a9a9a"/><rect x="8.00" y="8.00" width="2.7" height="2.7" fill="#0b870b"/><rect x="10.67" y="8.00" width="2.7" height="2.7" fill="#000"/><rect x="13.33" y="8.00" width="2.7" height="2.7" fill="#a00000"/><rect x="0.00" y="10.67" width="2.7" height="2.7" fill="#000"/><rect x="2.67" y="10.67" width="2.7" height="2.7" fill="#a00000"/><rect x="5.33" y="10.67" width="2.7" height="2.7" fill="#00009a"/><rect x="8.00" y="10.67" width="2.7" height="2.7" fill="#9a9a9a"/><rect x="10.67" y="10.67" width="2.7" height="2.7" fill="#0b870b"/><rect x="13.33" y="10.67" width="2.7" height="2.7" fill="#000"/><rect x="0.00" y="13.33" width="2.7" height="2.7" fill="#0b870b"/><rect x="2.67" y="13.33" width="2.7" height="2.7" fill="#000"/><rect x="5.33" y="13.33" width="2.7" height="2.7" fill="#a00000"/><rect x="8.00" y="13.33" width="2.7" height="2.7" fill="#00009a"/><rect x="10.67" y="13.33" width="2.7" height="2.7" fill="#9a9a9a"/><rect x="13.33" y="13.33" width="2.7" height="2.7" fill="#0b870b"/><circle cx="8" cy="8" r="6.5" fill="#555" opacity="0.5"/><rect x="3" y="6" width="5" height="4" fill="#a00"/><rect x="8" y="6" width="5" height="4" fill="#009"/><rect x="4" y="3" width="8" height="3" fill="#ddd" opacity="0.7"/></svg>
<span class="t">玻璃<span style="font-size:11px;padding-left:1.5px">（VRayMtl ）[C...</span></span>
</div>
<div class="row" style="top:205px;background:#474747">
<svg class="a" style="left:2px;top:2px" width="16" height="16"><rect width="16" height="16" fill="#3a3a3a"/><circle cx="8" cy="8" r="7.2" fill="#080808"/><circle cx="8" cy="8" r="7.2" fill="url(#shade)"/></svg>
<span class="t">玻璃<span style="font-size:11px;padding-left:1.5px">1 （VRayMtl ）[...</span></span>
</div>
<div class="row" style="top:225px;background:#474747">
<svg class="a" style="left:2px;top:2px" width="16" height="16"><rect width="16" height="16" fill="#000"/><rect x="0.00" y="0.00" width="2.7" height="2.7" fill="#0b870b"/><rect x="2.67" y="0.00" width="2.7" height="2.7" fill="#000"/><rect x="5.33" y="0.00" width="2.7" height="2.7" fill="#a00000"/><rect x="8.00" y="0.00" width="2.7" height="2.7" fill="#00009a"/><rect x="10.67" y="0.00" width="2.7" height="2.7" fill="#9a9a9a"/><rect x="13.33" y="0.00" width="2.7" height="2.7" fill="#0b870b"/><rect x="0.00" y="2.67" width="2.7" height="2.7" fill="#9a9a9a"/><rect x="2.67" y="2.67" width="2.7" height="2.7" fill="#0b870b"/><rect x="5.33" y="2.67" width="2.7" height="2.7" fill="#000"/><rect x="8.00" y="2.67" width="2.7" height="2.7" fill="#a00000"/><rect x="10.67" y="2.67" width="2.7" height="2.7" fill="#00009a"/><rect x="13.33" y="2.67" width="2.7" height="2.7" fill="#9a9a9a"/><rect x="0.00" y="5.33" width="2.7" height="2.7" fill="#00009a"/><rect x="2.67" y="5.33" width="2.7" height="2.7" fill="#9a9a9a"/><rect x="5.33" y="5.33" width="2.7" height="2.7" fill="#0b870b"/><rect x="8.00" y="5.33" width="2.7" height="2.7" fill="#000"/><rect x="10.67" y="5.33" width="2.7" height="2.7" fill="#a00000"/><rect x="13.33" y="5.33" width="2.7" height="2.7" fill="#00009a"/><rect x="0.00" y="8.00" width="2.7" height="2.7" fill="#a00000"/><rect x="2.67" y="8.00" width="2.7" height="2.7" fill="#00009a"/><rect x="5.33" y="8.00" width="2.7" height="2.7" fill="#9a9a9a"/><rect x="8.00" y="8.00" width="2.7" height="2.7" fill="#0b870b"/><rect x="10.67" y="8.00" width="2.7" height="2.7" fill="#000"/><rect x="13.33" y="8.00" width="2.7" height="2.7" fill="#a00000"/><rect x="0.00" y="10.67" width="2.7" height="2.7" fill="#000"/><rect x="2.67" y="10.67" width="2.7" height="2.7" fill="#a00000"/><rect x="5.33" y="10.67" width="2.7" height="2.7" fill="#00009a"/><rect x="8.00" y="10.67" width="2.7" height="2.7" fill="#9a9a9a"/><rect x="10.67" y="10.67" width="2.7" height="2.7" fill="#0b870b"/><rect x="13.33" y="10.67" width="2.7" height="2.7" fill="#000"/><rect x="0.00" y="13.33" width="2.7" height="2.7" fill="#0b870b"/><rect x="2.67" y="13.33" width="2.7" height="2.7" fill="#000"/><rect x="5.33" y="13.33" width="2.7" height="2.7" fill="#a00000"/><rect x="8.00" y="13.33" width="2.7" height="2.7" fill="#00009a"/><rect x="10.67" y="13.33" width="2.7" height="2.7" fill="#9a9a9a"/><rect x="13.33" y="13.33" width="2.7" height="2.7" fill="#0b870b"/><circle cx="8" cy="8" r="7.2" fill="#b8b8b8"/><circle cx="8" cy="8" r="7.2" fill="url(#shade)"/><circle cx="6" cy="6" r="3" fill="#fff" opacity="0.25"/></svg>
<span class="t">白瓷漆<span style="font-size:11px;padding-left:1.5px">ee （VRayMtl...</span></span>
</div>
<div class="row" style="top:245px;background:#474747">
<svg class="a" style="left:2px;top:2px" width="16" height="16"><rect width="16" height="16" fill="#3a3a3a"/><circle cx="8" cy="8" r="7.2" fill="#2a2018"/><circle cx="8" cy="8" r="7.2" fill="url(#shade)"/><circle cx="5" cy="5.5" r="0.9" fill="#fff"/><circle cx="11.5" cy="11.5" r="0.8" fill="#fff"/></svg>
<span class="t">白色混油<span style="font-size:11px;padding-left:1.5px">sdfdsf （V...</span></span>
</div>
<div class="row" style="top:265px;background:#474747">
<svg class="a" style="left:2px;top:2px" width="16" height="16"><rect width="16" height="16" fill="#3a3a3a"/><circle cx="8" cy="8" r="7.2" fill="#6a6a6a"/><circle cx="8" cy="8" r="7.2" fill="url(#shade)"/><circle cx="6" cy="6" r="3" fill="#fff" opacity="0.25"/></svg>
<span class="t">纱帘<span style="font-size:11px;padding-left:1.5px">（VRayMtl ）[A...</span></span>
</div>
<div class="row" style="top:285px;background:#474747">
<svg class="a" style="left:2px;top:2px" width="16" height="16"><rect width="16" height="16" fill="#3a3a3a"/><circle cx="8" cy="8" r="7.2" fill="#7a6048"/><circle cx="8" cy="8" r="7.2" fill="url(#shade)"/><circle cx="6" cy="6" r="3" fill="#fff" opacity="0.25"/></svg>
<span class="t">网瘾小阿姨<span style="font-size:11px;padding-left:1.5px">0112 （...</span></span>
</div>
<div class="row" style="top:305px;background:linear-gradient(90deg,#2f4766,#3c5d8a)">
<svg class="a" style="left:2px;top:2px" width="16" height="16"><rect width="16" height="16" fill="#3a3a3a"/><circle cx="8" cy="8" r="7.2" fill="#1a0800"/><circle cx="8" cy="8" r="7.2" fill="url(#shade)"/><circle cx="5.5" cy="5" r="1.2" fill="#ff8020"/><circle cx="11.5" cy="12" r="1.3" fill="#ffa020"/></svg>
<span class="t">网瘾小阿姨<span style="font-size:11px;padding-left:1.5px">0113 （...</span></span>
</div>
<div class="row" style="top:325px;background:#474747">
<svg class="a" style="left:107px;top:1px" width="35" height="18"><path d="M17 0 L35 0 L35 18 L0 18 Z" fill="#a80000"/></svg>
<svg class="a" style="left:2px;top:2px" width="16" height="16"><rect width="16" height="16" fill="#3a3a3a"/><circle cx="8" cy="8" r="7.2" fill="#060606"/><circle cx="8" cy="8" r="7.2" fill="url(#shade)"/><circle cx="5" cy="5.5" r="0.9" fill="#fff"/><circle cx="11.5" cy="11.5" r="0.8" fill="#fff"/></svg>
<span class="t">网瘾小阿姨<span style="font-size:11px;padding-left:1.5px">0114 （...</span></span>
</div>
<div class="row" style="top:345px;background:#474747">
<svg class="a" style="left:107px;top:1px" width="35" height="18"><path d="M17 0 L35 0 L35 18 L0 18 Z" fill="#a80000"/></svg>
<svg class="a" style="left:2px;top:2px" width="16" height="16"><rect width="16" height="16" fill="#3a3a3a"/><circle cx="8" cy="8" r="7.2" fill="#d0c8b8"/><circle cx="8" cy="8" r="7.2" fill="url(#shade)"/><circle cx="6" cy="6" r="3" fill="#fff" opacity="0.25"/></svg>
<span class="t">网瘾小阿姨<span style="font-size:11px;padding-left:1.5px">0115 （...</span></span>
</div>
<div class="row" style="top:365px;background:#474747">
<svg class="a" style="left:107px;top:1px" width="35" height="18"><path d="M17 0 L35 0 L35 18 L0 18 Z" fill="#a80000"/></svg>
<svg class="a" style="left:2px;top:2px" width="16" height="16"><rect width="16" height="16" fill="#000"/><rect x="0.00" y="0.00" width="2.7" height="2.7" fill="#0b870b"/><rect x="2.67" y="0.00" width="2.7" height="2.7" fill="#000"/><rect x="5.33" y="0.00" width="2.7" height="2.7" fill="#a00000"/><rect x="8.00" y="0.00" width="2.7" height="2.7" fill="#00009a"/><rect x="10.67" y="0.00" width="2.7" height="2.7" fill="#9a9a9a"/><rect x="13.33" y="0.00" width="2.7" height="2.7" fill="#0b870b"/><rect x="0.00" y="2.67" width="2.7" height="2.7" fill="#9a9a9a"/><rect x="2.67" y="2.67" width="2.7" height="2.7" fill="#0b870b"/><rect x="5.33" y="2.67" width="2.7" height="2.7" fill="#000"/><rect x="8.00" y="2.67" width="2.7" height="2.7" fill="#a00000"/><rect x="10.67" y="2.67" width="2.7" height="2.7" fill="#00009a"/><rect x="13.33" y="2.67" width="2.7" height="2.7" fill="#9a9a9a"/><rect x="0.00" y="5.33" width="2.7" height="2.7" fill="#00009a"/><rect x="2.67" y="5.33" width="2.7" height="2.7" fill="#9a9a9a"/><rect x="5.33" y="5.33" width="2.7" height="2.7" fill="#0b870b"/><rect x="8.00" y="5.33" width="2.7" height="2.7" fill="#000"/><rect x="10.67" y="5.33" width="2.7" height="2.7" fill="#a00000"/><rect x="13.33" y="5.33" width="2.7" height="2.7" fill="#00009a"/><rect x="0.00" y="8.00" width="2.7" height="2.7" fill="#a00000"/><rect x="2.67" y="8.00" width="2.7" height="2.7" fill="#00009a"/><rect x="5.33" y="8.00" width="2.7" height="2.7" fill="#9a9a9a"/><rect x="8.00" y="8.00" width="2.7" height="2.7" fill="#0b870b"/><rect x="10.67" y="8.00" width="2.7" height="2.7" fill="#000"/><rect x="13.33" y="8.00" width="2.7" height="2.7" fill="#a00000"/><rect x="0.00" y="10.67" width="2.7" height="2.7" fill="#000"/><rect x="2.67" y="10.67" width="2.7" height="2.7" fill="#a00000"/><rect x="5.33" y="10.67" width="2.7" height="2.7" fill="#00009a"/><rect x="8.00" y="10.67" width="2.7" height="2.7" fill="#9a9a9a"/><rect x="10.67" y="10.67" width="2.7" height="2.7" fill="#0b870b"/><rect x="13.33" y="10.67" width="2.7" height="2.7" fill="#000"/><rect x="0.00" y="13.33" width="2.7" height="2.7" fill="#0b870b"/><rect x="2.67" y="13.33" width="2.7" height="2.7" fill="#000"/><rect x="5.33" y="13.33" width="2.7" height="2.7" fill="#a00000"/><rect x="8.00" y="13.33" width="2.7" height="2.7" fill="#00009a"/><rect x="10.67" y="13.33" width="2.7" height="2.7" fill="#9a9a9a"/><rect x="13.33" y="13.33" width="2.7" height="2.7" fill="#0b870b"/><circle cx="8" cy="8" r="7.2" fill="#1e100c"/><circle cx="8" cy="8" r="7.2" fill="url(#shade)"/></svg>
<span class="t">网瘾小阿姨<span style="font-size:11px;padding-left:1.5px">0116 （...</span></span>
</div>
<div class="row" style="top:385px;background:#474747">
<svg class="a" style="left:2px;top:2px" width="16" height="16"><rect width="16" height="16" fill="#000"/><rect x="0.00" y="0.00" width="2.7" height="2.7" fill="#0b870b"/><rect x="2.67" y="0.00" width="2.7" height="2.7" fill="#000"/><rect x="5.33" y="0.00" width="2.7" height="2.7" fill="#a00000"/><rect x="8.00" y="0.00" width="2.7" height="2.7" fill="#00009a"/><rect x="10.67" y="0.00" width="2.7" height="2.7" fill="#9a9a9a"/><rect x="13.33" y="0.00" width="2.7" height="2.7" fill="#0b870b"/><rect x="0.00" y="2.67" width="2.7" height="2.7" fill="#9a9a9a"/><rect x="2.67" y="2.67" width="2.7" height="2.7" fill="#0b870b"/><rect x="5.33" y="2.67" width="2.7" height="2.7" fill="#000"/><rect x="8.00" y="2.67" width="2.7" height="2.7" fill="#a00000"/><rect x="10.67" y="2.67" width="2.7" height="2.7" fill="#00009a"/><rect x="13.33" y="2.67" width="2.7" height="2.7" fill="#9a9a9a"/><rect x="0.00" y="5.33" width="2.7" height="2.7" fill="#00009a"/><rect x="2.67" y="5.33" width="2.7" height="2.7" fill="#9a9a9a"/><rect x="5.33" y="5.33" width="2.7" height="2.7" fill="#0b870b"/><rect x="8.00" y="5.33" width="2.7" height="2.7" fill="#000"/><rect x="10.67" y="5.33" width="2.7" height="2.7" fill="#a00000"/><rect x="13.33" y="5.33" width="2.7" height="2.7" fill="#00009a"/><rect x="0.00" y="8.00" width="2.7" height="2.7" fill="#a00000"/><rect x="2.67" y="8.00" width="2.7" height="2.7" fill="#00009a"/><rect x="5.33" y="8.00" width="2.7" height="2.7" fill="#9a9a9a"/><rect x="8.00" y="8.00" width="2.7" height="2.7" fill="#0b870b"/><rect x="10.67" y="8.00" width="2.7" height="2.7" fill="#000"/><rect x="13.33" y="8.00" width="2.7" height="2.7" fill="#a00000"/><rect x="0.00" y="10.67" width="2.7" height="2.7" fill="#000"/><rect x="2.67" y="10.67" width="2.7" height="2.7" fill="#a00000"/><rect x="5.33" y="10.67" width="2.7" height="2.7" fill="#00009a"/><rect x="8.00" y="10.67" width="2.7" height="2.7" fill="#9a9a9a"/><rect x="10.67" y="10.67" width="2.7" height="2.7" fill="#0b870b"/><rect x="13.33" y="10.67" width="2.7" height="2.7" fill="#000"/><rect x="0.00" y="13.33" width="2.7" height="2.7" fill="#0b870b"/><rect x="2.67" y="13.33" width="2.7" height="2.7" fill="#000"/><rect x="5.33" y="13.33" width="2.7" height="2.7" fill="#a00000"/><rect x="8.00" y="13.33" width="2.7" height="2.7" fill="#00009a"/><rect x="10.67" y="13.33" width="2.7" height="2.7" fill="#9a9a9a"/><rect x="13.33" y="13.33" width="2.7" height="2.7" fill="#0b870b"/><circle cx="8" cy="8" r="7.2" fill="#2a1a0a"/><circle cx="8" cy="8" r="7.2" fill="url(#shade)"/><circle cx="5.5" cy="5" r="1.2" fill="#ff8020"/><circle cx="11.5" cy="12" r="1.3" fill="#ffa020"/></svg>
<span class="t">网瘾小阿姨<span style="font-size:11px;padding-left:1.5px">0119 （...</span></span>
</div>
<div class="row" style="top:405px;background:#474747">
<svg class="a" style="left:2px;top:2px" width="16" height="16"><rect width="16" height="16" fill="#000"/><rect x="0.00" y="0.00" width="2.7" height="2.7" fill="#0b870b"/><rect x="2.67" y="0.00" width="2.7" height="2.7" fill="#000"/><rect x="5.33" y="0.00" width="2.7" height="2.7" fill="#a00000"/><rect x="8.00" y="0.00" width="2.7" height="2.7" fill="#00009a"/><rect x="10.67" y="0.00" width="2.7" height="2.7" fill="#9a9a9a"/><rect x="13.33" y="0.00" width="2.7" height="2.7" fill="#0b870b"/><rect x="0.00" y="2.67" width="2.7" height="2.7" fill="#9a9a9a"/><rect x="2.67" y="2.67" width="2.7" height="2.7" fill="#0b870b"/><rect x="5.33" y="2.67" width="2.7" height="2.7" fill="#000"/><rect x="8.00" y="2.67" width="2.7" height="2.7" fill="#a00000"/><rect x="10.67" y="2.67" width="2.7" height="2.7" fill="#00009a"/><rect x="13.33" y="2.67" width="2.7" height="2.7" fill="#9a9a9a"/><rect x="0.00" y="5.33" width="2.7" height="2.7" fill="#00009a"/><rect x="2.67" y="5.33" width="2.7" height="2.7" fill="#9a9a9a"/><rect x="5.33" y="5.33" width="2.7" height="2.7" fill="#0b870b"/><rect x="8.00" y="5.33" width="2.7" height="2.7" fill="#000"/><rect x="10.67" y="5.33" width="2.7" height="2.7" fill="#a00000"/><rect x="13.33" y="5.33" width="2.7" height="2.7" fill="#00009a"/><rect x="0.00" y="8.00" width="2.7" height="2.7" fill="#a00000"/><rect x="2.67" y="8.00" width="2.7" height="2.7" fill="#00009a"/><rect x="5.33" y="8.00" width="2.7" height="2.7" fill="#9a9a9a"/><rect x="8.00" y="8.00" width="2.7" height="2.7" fill="#0b870b"/><rect x="10.67" y="8.00" width="2.7" height="2.7" fill="#000"/><rect x="13.33" y="8.00" width="2.7" height="2.7" fill="#a00000"/><rect x="0.00" y="10.67" width="2.7" height="2.7" fill="#000"/><rect x="2.67" y="10.67" width="2.7" height="2.7" fill="#a00000"/><rect x="5.33" y="10.67" width="2.7" height="2.7" fill="#00009a"/><rect x="8.00" y="10.67" width="2.7" height="2.7" fill="#9a9a9a"/><rect x="10.67" y="10.67" width="2.7" height="2.7" fill="#0b870b"/><rect x="13.33" y="10.67" width="2.7" height="2.7" fill="#000"/><rect x="0.00" y="13.33" width="2.7" height="2.7" fill="#0b870b"/><rect x="2.67" y="13.33" width="2.7" height="2.7" fill="#000"/><rect x="5.33" y="13.33" width="2.7" height="2.7" fill="#a00000"/><rect x="8.00" y="13.33" width="2.7" height="2.7" fill="#00009a"/><rect x="10.67" y="13.33" width="2.7" height="2.7" fill="#9a9a9a"/><rect x="13.33" y="13.33" width="2.7" height="2.7" fill="#0b870b"/><circle cx="8" cy="8" r="7.2" fill="#2a0808"/><circle cx="8" cy="8" r="7.2" fill="url(#shade)"/><circle cx="6" cy="6" r="3" fill="#fff" opacity="0.25"/></svg>
<span class="t">网瘾小阿姨<span style="font-size:11px;padding-left:1.5px">0120 （...</span></span>
</div>
<div class="row" style="top:425px;background:#474747">
<svg class="a" style="left:107px;top:1px" width="35" height="18"><path d="M17 0 L35 0 L35 18 L0 18 Z" fill="#a80000"/></svg>
<svg class="a" style="left:2px;top:2px" width="16" height="16"><rect width="16" height="16" fill="#000"/><rect x="0.00" y="0.00" width="2.7" height="2.7" fill="#0b870b"/><rect x="2.67" y="0.00" width="2.7" height="2.7" fill="#000"/><rect x="5.33" y="0.00" width="2.7" height="2.7" fill="#a00000"/><rect x="8.00" y="0.00" width="2.7" height="2.7" fill="#00009a"/><rect x="10.67" y="0.00" width="2.7" height="2.7" fill="#9a9a9a"/><rect x="13.33" y="0.00" width="2.7" height="2.7" fill="#0b870b"/><rect x="0.00" y="2.67" width="2.7" height="2.7" fill="#9a9a9a"/><rect x="2.67" y="2.67" width="2.7" height="2.7" fill="#0b870b"/><rect x="5.33" y="2.67" width="2.7" height="2.7" fill="#000"/><rect x="8.00" y="2.67" width="2.7" height="2.7" fill="#a00000"/><rect x="10.67" y="2.67" width="2.7" height="2.7" fill="#00009a"/><rect x="13.33" y="2.67" width="2.7" height="2.7" fill="#9a9a9a"/><rect x="0.00" y="5.33" width="2.7" height="2.7" fill="#00009a"/><rect x="2.67" y="5.33" width="2.7" height="2.7" fill="#9a9a9a"/><rect x="5.33" y="5.33" width="2.7" height="2.7" fill="#0b870b"/><rect x="8.00" y="5.33" width="2.7" height="2.7" fill="#000"/><rect x="10.67" y="5.33" width="2.7" height="2.7" fill="#a00000"/><rect x="13.33" y="5.33" width="2.7" height="2.7" fill="#00009a"/><rect x="0.00" y="8.00" width="2.7" height="2.7" fill="#a00000"/><rect x="2.67" y="8.00" width="2.7" height="2.7" fill="#00009a"/><rect x="5.33" y="8.00" width="2.7" height="2.7" fill="#9a9a9a"/><rect x="8.00" y="8.00" width="2.7" height="2.7" fill="#0b870b"/><rect x="10.67" y="8.00" width="2.7" height="2.7" fill="#000"/><rect x="13.33" y="8.00" width="2.7" height="2.7" fill="#a00000"/><rect x="0.00" y="10.67" width="2.7" height="2.7" fill="#000"/><rect x="2.67" y="10.67" width="2.7" height="2.7" fill="#a00000"/><rect x="5.33" y="10.67" width="2.7" height="2.7" fill="#00009a"/><rect x="8.00" y="10.67" width="2.7" height="2.7" fill="#9a9a9a"/><rect x="10.67" y="10.67" width="2.7" height="2.7" fill="#0b870b"/><rect x="13.33" y="10.67" width="2.7" height="2.7" fill="#000"/><rect x="0.00" y="13.33" width="2.7" height="2.7" fill="#0b870b"/><rect x="2.67" y="13.33" width="2.7" height="2.7" fill="#000"/><rect x="5.33" y="13.33" width="2.7" height="2.7" fill="#a00000"/><rect x="8.00" y="13.33" width="2.7" height="2.7" fill="#00009a"/><rect x="10.67" y="13.33" width="2.7" height="2.7" fill="#9a9a9a"/><rect x="13.33" y="13.33" width="2.7" height="2.7" fill="#0b870b"/><circle cx="8" cy="8" r="7.2" fill="#d8d8d8"/><circle cx="8" cy="8" r="7.2" fill="url(#shade)"/><circle cx="6" cy="6" r="3" fill="#fff" opacity="0.25"/></svg>
<span class="t">网瘾小阿姨<span style="font-size:11px;padding-left:1.5px">0121 （...</span></span>
</div>
<div class="row" style="top:445px;background:#474747">
<svg class="a" style="left:2px;top:2px" width="16" height="16"><rect width="16" height="16" fill="#000"/><rect x="0.00" y="0.00" width="2.7" height="2.7" fill="#0b870b"/><rect x="2.67" y="0.00" width="2.7" height="2.7" fill="#000"/><rect x="5.33" y="0.00" width="2.7" height="2.7" fill="#a00000"/><rect x="8.00" y="0.00" width="2.7" height="2.7" fill="#00009a"/><rect x="10.67" y="0.00" width="2.7" height="2.7" fill="#9a9a9a"/><rect x="13.33" y="0.00" width="2.7" height="2.7" fill="#0b870b"/><rect x="0.00" y="2.67" width="2.7" height="2.7" fill="#9a9a9a"/><rect x="2.67" y="2.67" width="2.7" height="2.7" fill="#0b870b"/><rect x="5.33" y="2.67" width="2.7" height="2.7" fill="#000"/><rect x="8.00" y="2.67" width="2.7" height="2.7" fill="#a00000"/><rect x="10.67" y="2.67" width="2.7" height="2.7" fill="#00009a"/><rect x="13.33" y="2.67" width="2.7" height="2.7" fill="#9a9a9a"/><rect x="0.00" y="5.33" width="2.7" height="2.7" fill="#00009a"/><rect x="2.67" y="5.33" width="2.7" height="2.7" fill="#9a9a9a"/><rect x="5.33" y="5.33" width="2.7" height="2.7" fill="#0b870b"/><rect x="8.00" y="5.33" width="2.7" height="2.7" fill="#000"/><rect x="10.67" y="5.33" width="2.7" height="2.7" fill="#a00000"/><rect x="13.33" y="5.33" width="2.7" height="2.7" fill="#00009a"/><rect x="0.00" y="8.00" width="2.7" height="2.7" fill="#a00000"/><rect x="2.67" y="8.00" width="2.7" height="2.7" fill="#00009a"/><rect x="5.33" y="8.00" width="2.7" height="2.7" fill="#9a9a9a"/><rect x="8.00" y="8.00" width="2.7" height="2.7" fill="#0b870b"/><rect x="10.67" y="8.00" width="2.7" height="2.7" fill="#000"/><rect x="13.33" y="8.00" width="2.7" height="2.7" fill="#a00000"/><rect x="0.00" y="10.67" width="2.7" height="2.7" fill="#000"/><rect x="2.67" y="10.67" width="2.7" height="2.7" fill="#a00000"/><rect x="5.33" y="10.67" width="2.7" height="2.7" fill="#00009a"/><rect x="8.00" y="10.67" width="2.7" height="2.7" fill="#9a9a9a"/><rect x="10.67" y="10.67" width="2.7" height="2.7" fill="#0b870b"/><rect x="13.33" y="10.67" width="2.7" height="2.7" fill="#000"/><rect x="0.00" y="13.33" width="2.7" height="2.7" fill="#0b870b"/><rect x="2.67" y="13.33" width="2.7" height="2.7" fill="#000"/><rect x="5.33" y="13.33" width="2.7" height="2.7" fill="#a00000"/><rect x="8.00" y="13.33" width="2.7" height="2.7" fill="#00009a"/><rect x="10.67" y="13.33" width="2.7" height="2.7" fill="#9a9a9a"/><rect x="13.33" y="13.33" width="2.7" height="2.7" fill="#0b870b"/><circle cx="8" cy="8" r="7.2" fill="#c8c8d0"/><circle cx="8" cy="8" r="7.2" fill="url(#shade)"/><circle cx="6" cy="6" r="3" fill="#fff" opacity="0.25"/></svg>
<span class="t">网瘾小阿姨<span style="font-size:11px;padding-left:1.5px">0122 （...</span></span>
</div>
<div class="row" style="top:465px;background:#474747">
<svg class="a" style="left:2px;top:2px" width="16" height="16"><rect width="16" height="16" fill="#000"/><rect x="0.00" y="0.00" width="2.7" height="2.7" fill="#0b870b"/><rect x="2.67" y="0.00" width="2.7" height="2.7" fill="#000"/><rect x="5.33" y="0.00" width="2.7" height="2.7" fill="#a00000"/><rect x="8.00" y="0.00" width="2.7" height="2.7" fill="#00009a"/><rect x="10.67" y="0.00" width="2.7" height="2.7" fill="#9a9a9a"/><rect x="13.33" y="0.00" width="2.7" height="2.7" fill="#0b870b"/><rect x="0.00" y="2.67" width="2.7" height="2.7" fill="#9a9a9a"/><rect x="2.67" y="2.67" width="2.7" height="2.7" fill="#0b870b"/><rect x="5.33" y="2.67" width="2.7" height="2.7" fill="#000"/><rect x="8.00" y="2.67" width="2.7" height="2.7" fill="#a00000"/><rect x="10.67" y="2.67" width="2.7" height="2.7" fill="#00009a"/><rect x="13.33" y="2.67" width="2.7" height="2.7" fill="#9a9a9a"/><rect x="0.00" y="5.33" width="2.7" height="2.7" fill="#00009a"/><rect x="2.67" y="5.33" width="2.7" height="2.7" fill="#9a9a9a"/><rect x="5.33" y="5.33" width="2.7" height="2.7" fill="#0b870b"/><rect x="8.00" y="5.33" width="2.7" height="2.7" fill="#000"/><rect x="10.67" y="5.33" width="2.7" height="2.7" fill="#a00000"/><rect x="13.33" y="5.33" width="2.7" height="2.7" fill="#00009a"/><rect x="0.00" y="8.00" width="2.7" height="2.7" fill="#a00000"/><rect x="2.67" y="8.00" width="2.7" height="2.7" fill="#00009a"/><rect x="5.33" y="8.00" width="2.7" height="2.7" fill="#9a9a9a"/><rect x="8.00" y="8.00" width="2.7" height="2.7" fill="#0b870b"/><rect x="10.67" y="8.00" width="2.7" height="2.7" fill="#000"/><rect x="13.33" y="8.00" width="2.7" height="2.7" fill="#a00000"/><rect x="0.00" y="10.67" width="2.7" height="2.7" fill="#000"/><rect x="2.67" y="10.67" width="2.7" height="2.7" fill="#a00000"/><rect x="5.33" y="10.67" width="2.7" height="2.7" fill="#00009a"/><rect x="8.00" y="10.67" width="2.7" height="2.7" fill="#9a9a9a"/><rect x="10.67" y="10.67" width="2.7" height="2.7" fill="#0b870b"/><rect x="13.33" y="10.67" width="2.7" height="2.7" fill="#000"/><rect x="0.00" y="13.33" width="2.7" height="2.7" fill="#0b870b"/><rect x="2.67" y="13.33" width="2.7" height="2.7" fill="#000"/><rect x="5.33" y="13.33" width="2.7" height="2.7" fill="#a00000"/><rect x="8.00" y="13.33" width="2.7" height="2.7" fill="#00009a"/><rect x="10.67" y="13.33" width="2.7" height="2.7" fill="#9a9a9a"/><rect x="13.33" y="13.33" width="2.7" height="2.7" fill="#0b870b"/><circle cx="8" cy="8" r="7.2" fill="#a09080"/><circle cx="8" cy="8" r="7.2" fill="url(#shade)"/><circle cx="6" cy="6" r="3" fill="#fff" opacity="0.25"/></svg>
<span class="t">网瘾小阿姨<span style="font-size:11px;padding-left:1.5px">0128 （...</span></span>
</div>
<div class="row" style="top:485px;background:#474747">
<svg class="a" style="left:2px;top:2px" width="16" height="16"><rect width="16" height="16" fill="#000"/><rect x="0.00" y="0.00" width="2.7" height="2.7" fill="#0b870b"/><rect x="2.67" y="0.00" width="2.7" height="2.7" fill="#000"/><rect x="5.33" y="0.00" width="2.7" height="2.7" fill="#a00000"/><rect x="8.00" y="0.00" width="2.7" height="2.7" fill="#00009a"/><rect x="10.67" y="0.00" width="2.7" height="2.7" fill="#9a9a9a"/><rect x="13.33" y="0.00" width="2.7" height="2.7" fill="#0b870b"/><rect x="0.00" y="2.67" width="2.7" height="2.7" fill="#9a9a9a"/><rect x="2.67" y="2.67" width="2.7" height="2.7" fill="#0b870b"/><rect x="5.33" y="2.67" width="2.7" height="2.7" fill="#000"/><rect x="8.00" y="2.67" width="2.7" height="2.7" fill="#a00000"/><rect x="10.67" y="2.67" width="2.7" height="2.7" fill="#00009a"/><rect x="13.33" y="2.67" width="2.7" height="2.7" fill="#9a9a9a"/><rect x="0.00" y="5.33" width="2.7" height="2.7" fill="#00009a"/><rect x="2.67" y="5.33" width="2.7" height="2.7" fill="#9a9a9a"/><rect x="5.33" y="5.33" width="2.7" height="2.7" fill="#0b870b"/><rect x="8.00" y="5.33" width="2.7" height="2.7" fill="#000"/><rect x="10.67" y="5.33" width="2.7" height="2.7" fill="#a00000"/><rect x="13.33" y="5.33" width="2.7" height="2.7" fill="#00009a"/><rect x="0.00" y="8.00" width="2.7" height="2.7" fill="#a00000"/><rect x="2.67" y="8.00" width="2.7" height="2.7" fill="#00009a"/><rect x="5.33" y="8.00" width="2.7" height="2.7" fill="#9a9a9a"/><rect x="8.00" y="8.00" width="2.7" height="2.7" fill="#0b870b"/><rect x="10.67" y="8.00" width="2.7" height="2.7" fill="#000"/><rect x="13.33" y="8.00" width="2.7" height="2.7" fill="#a00000"/><rect x="0.00" y="10.67" width="2.7" height="2.7" fill="#000"/><rect x="2.67" y="10.67" width="2.7" height="2.7" fill="#a00000"/><rect x="5.33" y="10.67" width="2.7" height="2.7" fill="#00009a"/><rect x="8.00" y="10.67" width="2.7" height="2.7" fill="#9a9a9a"/><rect x="10.67" y="10.67" width="2.7" height="2.7" fill="#0b870b"/><rect x="13.33" y="10.67" width="2.7" height="2.7" fill="#000"/><rect x="0.00" y="13.33" width="2.7" height="2.7" fill="#0b870b"/><rect x="2.67" y="13.33" width="2.7" height="2.7" fill="#000"/><rect x="5.33" y="13.33" width="2.7" height="2.7" fill="#a00000"/><rect x="8.00" y="13.33" width="2.7" height="2.7" fill="#00009a"/><rect x="10.67" y="13.33" width="2.7" height="2.7" fill="#9a9a9a"/><rect x="13.33" y="13.33" width="2.7" height="2.7" fill="#0b870b"/><circle cx="8" cy="8" r="7.2" fill="#1a1a2a"/><circle cx="8" cy="8" r="7.2" fill="url(#shade)"/></svg>
<span class="t">网瘾小阿姨<span style="font-size:11px;padding-left:1.5px">0129 （...</span></span>
</div>
<div class="row" style="top:505px;background:#474747">
<svg class="a" style="left:2px;top:2px" width="16" height="16"><rect width="16" height="16" fill="#000"/><rect x="0.00" y="0.00" width="2.7" height="2.7" fill="#0b870b"/><rect x="2.67" y="0.00" width="2.7" height="2.7" fill="#000"/><rect x="5.33" y="0.00" width="2.7" height="2.7" fill="#a00000"/><rect x="8.00" y="0.00" width="2.7" height="2.7" fill="#00009a"/><rect x="10.67" y="0.00" width="2.7" height="2.7" fill="#9a9a9a"/><rect x="13.33" y="0.00" width="2.7" height="2.7" fill="#0b870b"/><rect x="0.00" y="2.67" width="2.7" height="2.7" fill="#9a9a9a"/><rect x="2.67" y="2.67" width="2.7" height="2.7" fill="#0b870b"/><rect x="5.33" y="2.67" width="2.7" height="2.7" fill="#000"/><rect x="8.00" y="2.67" width="2.7" height="2.7" fill="#a00000"/><rect x="10.67" y="2.67" width="2.7" height="2.7" fill="#00009a"/><rect x="13.33" y="2.67" width="2.7" height="2.7" fill="#9a9a9a"/><rect x="0.00" y="5.33" width="2.7" height="2.7" fill="#00009a"/><rect x="2.67" y="5.33" width="2.7" height="2.7" fill="#9a9a9a"/><rect x="5.33" y="5.33" width="2.7" height="2.7" fill="#0b870b"/><rect x="8.00" y="5.33" width="2.7" height="2.7" fill="#000"/><rect x="10.67" y="5.33" width="2.7" height="2.7" fill="#a00000"/><rect x="13.33" y="5.33" width="2.7" height="2.7" fill="#00009a"/><rect x="0.00" y="8.00" width="2.7" height="2.7" fill="#a00000"/><rect x="2.67" y="8.00" width="2.7" height="2.7" fill="#00009a"/><rect x="5.33" y="8.00" width="2.7" height="2.7" fill="#9a9a9a"/><rect x="8.00" y="8.00" width="2.7" height="2.7" fill="#0b870b"/><rect x="10.67" y="8.00" width="2.7" height="2.7" fill="#000"/><rect x="13.33" y="8.00" width="2.7" height="2.7" fill="#a00000"/><rect x="0.00" y="10.67" width="2.7" height="2.7" fill="#000"/><rect x="2.67" y="10.67" width="2.7" height="2.7" fill="#a00000"/><rect x="5.33" y="10.67" width="2.7" height="2.7" fill="#00009a"/><rect x="8.00" y="10.67" width="2.7" height="2.7" fill="#9a9a9a"/><rect x="10.67" y="10.67" width="2.7" height="2.7" fill="#0b870b"/><rect x="13.33" y="10.67" width="2.7" height="2.7" fill="#000"/><rect x="0.00" y="13.33" width="2.7" height="2.7" fill="#0b870b"/><rect x="2.67" y="13.33" width="2.7" height="2.7" fill="#000"/><rect x="5.33" y="13.33" width="2.7" height="2.7" fill="#a00000"/><rect x="8.00" y="13.33" width="2.7" height="2.7" fill="#00009a"/><rect x="10.67" y="13.33" width="2.7" height="2.7" fill="#9a9a9a"/><rect x="13.33" y="13.33" width="2.7" height="2.7" fill="#0b870b"/><circle cx="8" cy="8" r="7.2" fill="#6a4a2a"/><circle cx="8" cy="8" r="7.2" fill="url(#shade)"/></svg>
<span class="t">网瘾小阿姨<span style="font-size:11px;padding-left:1.5px">0130 （...</span></span>
</div>
<div class="row" style="top:525px;background:#474747">
<svg class="a" style="left:2px;top:2px" width="16" height="16"><rect width="16" height="16" fill="#3a3a3a"/><circle cx="8" cy="8" r="7.2" fill="#444"/><circle cx="8" cy="8" r="7.2" fill="url(#shade)"/><circle cx="6" cy="6" r="3" fill="#fff" opacity="0.25"/></svg>
<span class="t">网瘾小阿姨<span style="font-size:11px;padding-left:1.5px">0131 （...</span></span>
</div>
<div class="row" style="top:545px;background:#474747">
<svg class="a" style="left:2px;top:2px" width="16" height="16"><rect width="16" height="16" fill="#000"/><rect x="0.00" y="0.00" width="2.7" height="2.7" fill="#0b870b"/><rect x="2.67" y="0.00" width="2.7" height="2.7" fill="#000"/><rect x="5.33" y="0.00" width="2.7" height="2.7" fill="#a00000"/><rect x="8.00" y="0.00" width="2.7" height="2.7" fill="#00009a"/><rect x="10.67" y="0.00" width="2.7" height="2.7" fill="#9a9a9a"/><rect x="13.33" y="0.00" width="2.7" height="2.7" fill="#0b870b"/><rect x="0.00" y="2.67" width="2.7" height="2.7" fill="#9a9a9a"/><rect x="2.67" y="2.67" width="2.7" height="2.7" fill="#0b870b"/><rect x="5.33" y="2.67" width="2.7" height="2.7" fill="#000"/><rect x="8.00" y="2.67" width="2.7" height="2.7" fill="#a00000"/><rect x="10.67" y="2.67" width="2.7" height="2.7" fill="#00009a"/><rect x="13.33" y="2.67" width="2.7" height="2.7" fill="#9a9a9a"/><rect x="0.00" y="5.33" width="2.7" height="2.7" fill="#00009a"/><rect x="2.67" y="5.33" width="2.7" height="2.7" fill="#9a9a9a"/><rect x="5.33" y="5.33" width="2.7" height="2.7" fill="#0b870b"/><rect x="8.00" y="5.33" width="2.7" height="2.7" fill="#000"/><rect x="10.67" y="5.33" width="2.7" height="2.7" fill="#a00000"/><rect x="13.33" y="5.33" width="2.7" height="2.7" fill="#00009a"/><rect x="0.00" y="8.00" width="2.7" height="2.7" fill="#a00000"/><rect x="2.67" y="8.00" width="2.7" height="2.7" fill="#00009a"/><rect x="5.33" y="8.00" width="2.7" height="2.7" fill="#9a9a9a"/><rect x="8.00" y="8.00" width="2.7" height="2.7" fill="#0b870b"/><rect x="10.67" y="8.00" width="2.7" height="2.7" fill="#000"/><rect x="13.33" y="8.00" width="2.7" height="2.7" fill="#a00000"/><rect x="0.00" y="10.67" width="2.7" height="2.7" fill="#000"/><rect x="2.67" y="10.67" width="2.7" height="2.7" fill="#a00000"/><rect x="5.33" y="10.67" width="2.7" height="2.7" fill="#00009a"/><rect x="8.00" y="10.67" width="2.7" height="2.7" fill="#9a9a9a"/><rect x="10.67" y="10.67" width="2.7" height="2.7" fill="#0b870b"/><rect x="13.33" y="10.67" width="2.7" height="2.7" fill="#000"/><rect x="0.00" y="13.33" width="2.7" height="2.7" fill="#0b870b"/><rect x="2.67" y="13.33" width="2.7" height="2.7" fill="#000"/><rect x="5.33" y="13.33" width="2.7" height="2.7" fill="#a00000"/><rect x="8.00" y="13.33" width="2.7" height="2.7" fill="#00009a"/><rect x="10.67" y="13.33" width="2.7" height="2.7" fill="#9a9a9a"/><rect x="13.33" y="13.33" width="2.7" height="2.7" fill="#0b870b"/><circle cx="8" cy="8" r="7.2" fill="#c0a080"/><circle cx="8" cy="8" r="7.2" fill="url(#shade)"/><circle cx="6" cy="6" r="3" fill="#fff" opacity="0.25"/></svg>
<span class="t">网瘾小阿姨<span style="font-size:11px;padding-left:1.5px">0132 （...</span></span>
</div>
<div class="row" style="top:565px;background:#474747">
<svg class="a" style="left:2px;top:2px" width="16" height="16"><rect width="16" height="16" fill="#000"/><rect x="0.00" y="0.00" width="2.7" height="2.7" fill="#0b870b"/><rect x="2.67" y="0.00" width="2.7" height="2.7" fill="#000"/><rect x="5.33" y="0.00" width="2.7" height="2.7" fill="#a00000"/><rect x="8.00" y="0.00" width="2.7" height="2.7" fill="#00009a"/><rect x="10.67" y="0.00" width="2.7" height="2.7" fill="#9a9a9a"/><rect x="13.33" y="0.00" width="2.7" height="2.7" fill="#0b870b"/><rect x="0.00" y="2.67" width="2.7" height="2.7" fill="#9a9a9a"/><rect x="2.67" y="2.67" width="2.7" height="2.7" fill="#0b870b"/><rect x="5.33" y="2.67" width="2.7" height="2.7" fill="#000"/><rect x="8.00" y="2.67" width="2.7" height="2.7" fill="#a00000"/><rect x="10.67" y="2.67" width="2.7" height="2.7" fill="#00009a"/><rect x="13.33" y="2.67" width="2.7" height="2.7" fill="#9a9a9a"/><rect x="0.00" y="5.33" width="2.7" height="2.7" fill="#00009a"/><rect x="2.67" y="5.33" width="2.7" height="2.7" fill="#9a9a9a"/><rect x="5.33" y="5.33" width="2.7" height="2.7" fill="#0b870b"/><rect x="8.00" y="5.33" width="2.7" height="2.7" fill="#000"/><rect x="10.67" y="5.33" width="2.7" height="2.7" fill="#a00000"/><rect x="13.33" y="5.33" width="2.7" height="2.7" fill="#00009a"/><rect x="0.00" y="8.00" width="2.7" height="2.7" fill="#a00000"/><rect x="2.67" y="8.00" width="2.7" height="2.7" fill="#00009a"/><rect x="5.33" y="8.00" width="2.7" height="2.7" fill="#9a9a9a"/><rect x="8.00" y="8.00" width="2.7" height="2.7" fill="#0b870b"/><rect x="10.67" y="8.00" width="2.7" height="2.7" fill="#000"/><rect x="13.33" y="8.00" width="2.7" height="2.7" fill="#a00000"/><rect x="0.00" y="10.67" width="2.7" height="2.7" fill="#000"/><rect x="2.67" y="10.67" width="2.7" height="2.7" fill="#a00000"/><rect x="5.33" y="10.67" width="2.7" height="2.7" fill="#00009a"/><rect x="8.00" y="10.67" width="2.7" height="2.7" fill="#9a9a9a"/><rect x="10.67" y="10.67" width="2.7" height="2.7" fill="#0b870b"/><rect x="13.33" y="10.67" width="2.7" height="2.7" fill="#000"/><rect x="0.00" y="13.33" width="2.7" height="2.7" fill="#0b870b"/><rect x="2.67" y="13.33" width="2.7" height="2.7" fill="#000"/><rect x="5.33" y="13.33" width="2.7" height="2.7" fill="#a00000"/><rect x="8.00" y="13.33" width="2.7" height="2.7" fill="#00009a"/><rect x="10.67" y="13.33" width="2.7" height="2.7" fill="#9a9a9a"/><rect x="13.33" y="13.33" width="2.7" height="2.7" fill="#0b870b"/><circle cx="8" cy="8" r="7.2" fill="#1a1a1a"/><circle cx="8" cy="8" r="7.2" fill="url(#shade)"/></svg>
<span class="t">网瘾小阿姨<span style="font-size:11px;padding-left:1.5px">0133 （...</span></span>
</div>
<div class="row" style="top:585px;background:#474747">
<svg class="a" style="left:2px;top:2px" width="16" height="16"><rect width="16" height="16" fill="#3a3a3a"/><circle cx="8" cy="8" r="7.2" fill="#1e1e1e"/><circle cx="8" cy="8" r="7.2" fill="url(#shade)"/><circle cx="5" cy="5.5" r="0.9" fill="#fff"/><circle cx="11.5" cy="11.5" r="0.8" fill="#fff"/></svg>
<span class="t">网瘾小阿姨<span style="font-size:11px;padding-left:1.5px">0134 （...</span></span>
</div>
<div class="row" style="top:605px;background:#474747">
<svg class="a" style="left:2px;top:2px" width="16" height="16"><rect width="16" height="16" fill="#000"/><rect x="0.00" y="0.00" width="2.7" height="2.7" fill="#0b870b"/><rect x="2.67" y="0.00" width="2.7" height="2.7" fill="#000"/><rect x="5.33" y="0.00" width="2.7" height="2.7" fill="#a00000"/><rect x="8.00" y="0.00" width="2.7" height="2.7" fill="#00009a"/><rect x="10.67" y="0.00" width="2.7" height="2.7" fill="#9a9a9a"/><rect x="13.33" y="0.00" width="2.7" height="2.7" fill="#0b870b"/><rect x="0.00" y="2.67" width="2.7" height="2.7" fill="#9a9a9a"/><rect x="2.67" y="2.67" width="2.7" height="2.7" fill="#0b870b"/><rect x="5.33" y="2.67" width="2.7" height="2.7" fill="#000"/><rect x="8.00" y="2.67" width="2.7" height="2.7" fill="#a00000"/><rect x="10.67" y="2.67" width="2.7" height="2.7" fill="#00009a"/><rect x="13.33" y="2.67" width="2.7" height="2.7" fill="#9a9a9a"/><rect x="0.00" y="5.33" width="2.7" height="2.7" fill="#00009a"/><rect x="2.67" y="5.33" width="2.7" height="2.7" fill="#9a9a9a"/><rect x="5.33" y="5.33" width="2.7" height="2.7" fill="#0b870b"/><rect x="8.00" y="5.33" width="2.7" height="2.7" fill="#000"/><rect x="10.67" y="5.33" width="2.7" height="2.7" fill="#a00000"/><rect x="13.33" y="5.33" width="2.7" height="2.7" fill="#00009a"/><rect x="0.00" y="8.00" width="2.7" height="2.7" fill="#a00000"/><rect x="2.67" y="8.00" width="2.7" height="2.7" fill="#00009a"/><rect x="5.33" y="8.00" width="2.7" height="2.7" fill="#9a9a9a"/><rect x="8.00" y="8.00" width="2.7" height="2.7" fill="#0b870b"/><rect x="10.67" y="8.00" width="2.7" height="2.7" fill="#000"/><rect x="13.33" y="8.00" width="2.7" height="2.7" fill="#a00000"/><rect x="0.00" y="10.67" width="2.7" height="2.7" fill="#000"/><rect x="2.67" y="10.67" width="2.7" height="2.7" fill="#a00000"/><rect x="5.33" y="10.67" width="2.7" height="2.7" fill="#00009a"/><rect x="8.00" y="10.67" width="2.7" height="2.7" fill="#9a9a9a"/><rect x="10.67" y="10.67" width="2.7" height="2.7" fill="#0b870b"/><rect x="13.33" y="10.67" width="2.7" height="2.7" fill="#000"/><rect x="0.00" y="13.33" width="2.7" height="2.7" fill="#0b870b"/><rect x="2.67" y="13.33" width="2.7" height="2.7" fill="#000"/><rect x="5.33" y="13.33" width="2.7" height="2.7" fill="#a00000"/><rect x="8.00" y="13.33" width="2.7" height="2.7" fill="#00009a"/><rect x="10.67" y="13.33" width="2.7" height="2.7" fill="#9a9a9a"/><rect x="13.33" y="13.33" width="2.7" height="2.7" fill="#0b870b"/><circle cx="8" cy="8" r="7.2" fill="#b0b0b0"/><circle cx="8" cy="8" r="7.2" fill="url(#shade)"/><circle cx="6" cy="6" r="3" fill="#fff" opacity="0.25"/></svg>
<span class="t">网瘾小阿姨<span style="font-size:11px;padding-left:1.5px">0135 （...</span></span>
</div>
<div class="row" style="top:625px;background:#474747">
<svg class="a" style="left:107px;top:1px" width="35" height="18"><path d="M17 0 L35 0 L35 18 L0 18 Z" fill="#a80000"/></svg>
<svg class="a" style="left:2px;top:2px" width="16" height="16"><rect width="16" height="16" fill="#000"/><rect x="0.00" y="0.00" width="2.7" height="2.7" fill="#0b870b"/><rect x="2.67" y="0.00" width="2.7" height="2.7" fill="#000"/><rect x="5.33" y="0.00" width="2.7" height="2.7" fill="#a00000"/><rect x="8.00" y="0.00" width="2.7" height="2.7" fill="#00009a"/><rect x="10.67" y="0.00" width="2.7" height="2.7" fill="#9a9a9a"/><rect x="13.33" y="0.00" width="2.7" height="2.7" fill="#0b870b"/><rect x="0.00" y="2.67" width="2.7" height="2.7" fill="#9a9a9a"/><rect x="2.67" y="2.67" width="2.7" height="2.7" fill="#0b870b"/><rect x="5.33" y="2.67" width="2.7" height="2.7" fill="#000"/><rect x="8.00" y="2.67" width="2.7" height="2.7" fill="#a00000"/><rect x="10.67" y="2.67" width="2.7" height="2.7" fill="#00009a"/><rect x="13.33" y="2.67" width="2.7" height="2.7" fill="#9a9a9a"/><rect x="0.00" y="5.33" width="2.7" height="2.7" fill="#00009a"/><rect x="2.67" y="5.33" width="2.7" height="2.7" fill="#9a9a9a"/><rect x="5.33" y="5.33" width="2.7" height="2.7" fill="#0b870b"/><rect x="8.00" y="5.33" width="2.7" height="2.7" fill="#000"/><rect x="10.67" y="5.33" width="2.7" height="2.7" fill="#a00000"/><rect x="13.33" y="5.33" width="2.7" height="2.7" fill="#00009a"/><rect x="0.00" y="8.00" width="2.7" height="2.7" fill="#a00000"/><rect x="2.67" y="8.00" width="2.7" height="2.7" fill="#00009a"/><rect x="5.33" y="8.00" width="2.7" height="2.7" fill="#9a9a9a"/><rect x="8.00" y="8.00" width="2.7" height="2.7" fill="#0b870b"/><rect x="10.67" y="8.00" width="2.7" height="2.7" fill="#000"/><rect x="13.33" y="8.00" width="2.7" height="2.7" fill="#a00000"/><rect x="0.00" y="10.67" width="2.7" height="2.7" fill="#000"/><rect x="2.67" y="10.67" width="2.7" height="2.7" fill="#a00000"/><rect x="5.33" y="10.67" width="2.7" height="2.7" fill="#00009a"/><rect x="8.00" y="10.67" width="2.7" height="2.7" fill="#9a9a9a"/><rect x="10.67" y="10.67" width="2.7" height="2.7" fill="#0b870b"/><rect x="13.33" y="10.67" width="2.7" height="2.7" fill="#000"/><rect x="0.00" y="13.33" width="2.7" height="2.7" fill="#0b870b"/><rect x="2.67" y="13.33" width="2.7" height="2.7" fill="#000"/><rect x="5.33" y="13.33" width="2.7" height="2.7" fill="#a00000"/><rect x="8.00" y="13.33" width="2.7" height="2.7" fill="#00009a"/><rect x="10.67" y="13.33" width="2.7" height="2.7" fill="#9a9a9a"/><rect x="13.33" y="13.33" width="2.7" height="2.7" fill="#0b870b"/><circle cx="8" cy="8" r="7.2" fill="#030303"/><circle cx="8" cy="8" r="7.2" fill="url(#shade)"/></svg>
<span class="t">网瘾小阿姨<span style="font-size:11px;padding-left:1.5px">0136 （...</span></span>
</div>
<div class="row" style="top:645px;background:#474747">
<svg class="a" style="left:2px;top:2px" width="16" height="16"><rect width="16" height="16" fill="#3a3a3a"/><circle cx="8" cy="8" r="7.2" fill="#3a3a3a"/><circle cx="8" cy="8" r="7.2" fill="url(#shade)"/><circle cx="6" cy="6" r="3" fill="#fff" opacity="0.25"/></svg>
<span class="t">网瘾小阿姨<span style="font-size:11px;padding-left:1.5px">0137 （...</span></span>
</div>
<div class="a" style="left:142px;top:0;width:9px;height:658px;background:#2e2e2e;border-left:1px solid #0d0d0d"></div>
<div class="a" style="left:143px;top:355px;width:8px;height:140px;background:linear-gradient(90deg,#b8b8b8,#8a8a8a 50%,#5a5a5a);border:1px solid #222"></div>
<div class="a" style="left:145px;top:424px;width:5px;height:1px;background:#333;box-shadow:0 3px 0 #333,0 -3px 0 #333"></div>
</div>
<div class="a" style="left:0;top:832px;width:168px;height:1px;background:#141414"></div>
<div class="sec" style="top:833px"><div class="secbox"><span class="a" style="left:2px;top:0;font-size:13px">-</span><span class="a" style="left:12px;top:0">示例窗</span></div></div>
<div class="a" style="left:15px;top:855px;width:152px;height:90px;background:#3c3c3c;border:1px solid #0d0d0d;overflow:hidden">
<div class="a" style="left:1px;top:1px;width:78px;height:90px;border:1px solid #555;background:#404040"></div>
<div class="a" style="left:81px;top:1px;width:78px;height:90px;border:1px solid #555;background:#404040"></div>
<svg class="a" style="left:5px;top:5px" width="70" height="70" viewBox="0 0 71 71"><rect width="71" height="71" fill="#fff"/><rect x="1.00" y="1.00" width="8.72" height="8.72" fill="#9a9a9a"/><rect x="9.62" y="1.00" width="8.72" height="8.72" fill="#00009a"/><rect x="18.25" y="1.00" width="8.72" height="8.72" fill="#000"/><rect x="26.88" y="1.00" width="8.72" height="8.72" fill="#9a9a9a"/><rect x="35.50" y="1.00" width="8.72" height="8.72" fill="#a00000"/><rect x="44.12" y="1.00" width="8.72" height="8.72" fill="#0b870b"/><rect x="52.75" y="1.00" width="8.72" height="8.72" fill="#00009a"/><rect x="61.38" y="1.00" width="8.72" height="8.72" fill="#9a9a9a"/><rect x="1.00" y="9.62" width="8.72" height="8.72" fill="#a00000"/><rect x="9.62" y="9.62" width="8.72" height="8.72" fill="#0b870b"/><rect x="18.25" y="9.62" width="8.72" height="8.72" fill="#0b870b"/><rect x="26.88" y="9.62" width="8.72" height="8.72" fill="#000"/><rect x="35.50" y="9.62" width="8.72" height="8.72" fill="#a00000"/><rect x="44.12" y="9.62" width="8.72" height="8.72" fill="#00009a"/><rect x="52.75" y="9.62" width="8.72" height="8.72" fill="#0b870b"/><rect x="61.38" y="9.62" width="8.72" height="8.72" fill="#00009a"/><rect x="1.00" y="18.25" width="8.72" height="8.72" fill="#9a9a9a"/><rect x="9.62" y="18.25" width="8.72" height="8.72" fill="#a00000"/><rect x="18.25" y="18.25" width="8.72" height="8.72" fill="#00009a"/><rect x="26.88" y="18.25" width="8.72" height="8.72" fill="#9a9a9a"/><rect x="35.50" y="18.25" width="8.72" height="8.72" fill="#0b870b"/><rect x="44.12" y="18.25" width="8.72" height="8.72" fill="#000"/><rect x="52.75" y="18.25" width="8.72" height="8.72" fill="#a00000"/><rect x="61.38" y="18.25" width="8.72" height="8.72" fill="#0b870b"/><rect x="1.00" y="26.88" width="8.72" height="8.72" fill="#000"/><rect x="9.62" y="26.88" width="8.72" height="8.72" fill="#0b870b"/><rect x="18.25" y="26.88" width="8.72" height="8.72" fill="#000"/><rect x="26.88" y="26.88" width="8.72" height="8.72" fill="#a00000"/><rect x="35.50" y="26.88" width="8.72" height="8.72" fill="#00009a"/><rect x="44.12" y="26.88" width="8.72" height="8.72" fill="#9a9a9a"/><rect x="52.75" y="26.88" width="8.72" height="8.72" fill="#0b870b"/><rect x="61.38" y="26.88" width="8.72" height="8.72" fill="#a00000"/><rect x="1.00" y="35.50" width="8.72" height="8.72" fill="#00009a"/><rect x="9.62" y="35.50" width="8.72" height="8.72" fill="#00009a"/><rect x="18.25" y="35.50" width="8.72" height="8.72" fill="#9a9a9a"/><rect x="26.88" y="35.50" width="8.72" height="8.72" fill="#0b870b"/><rect x="35.50" y="35.50" width="8.72" height="8.72" fill="#000"/><rect x="44.12" y="35.50" width="8.72" height="8.72" fill="#a00000"/><rect x="52.75" y="35.50" width="8.72" height="8.72" fill="#00009a"/><rect x="61.38" y="35.50" width="8.72" height="8.72" fill="#9a9a9a"/><rect x="1.00" y="44.12" width="8.72" height="8.72" fill="#0b870b"/><rect x="9.62" y="44.12" width="8.72" height="8.72" fill="#000"/><rect x="18.25" y="44.12" width="8.72" height="8.72" fill="#a00000"/><rect x="26.88" y="44.12" width="8.72" height="8.72" fill="#00009a"/><rect x="35.50" y="44.12" width="8.72" height="8.72" fill="#9a9a9a"/><rect x="44.12" y="44.12" width="8.72" height="8.72" fill="#0b870b"/><rect x="52.75" y="44.12" width="8.72" height="8.72" fill="#000"/><rect x="61.38" y="44.12" width="8.72" height="8.72" fill="#000"/><rect x="1.00" y="52.75" width="8.72" height="8.72" fill="#a00000"/><rect x="9.62" y="52.75" width="8.72" height="8.72" fill="#0b870b"/><rect x="18.25" y="52.75" width="8.72" height="8.72" fill="#0b870b"/><rect x="26.88" y="52.75" width="8.72" height="8.72" fill="#000"/><rect x="35.50" y="52.75" width="8.72" height="8.72" fill="#a00000"/><rect x="44.12" y="52.75" width="8.72" height="8.72" fill="#00009a"/><rect x="52.75" y="52.75" width="8.72" height="8.72" fill="#0b870b"/><rect x="61.38" y="52.75" width="8.72" height="8.72" fill="#00009a"/><rect x="1.00" y="61.38" width="8.72" height="8.72" fill="#9a9a9a"/><rect x="9.62" y="61.38" width="8.72" height="8.72" fill="#a00000"/><rect x="18.25" y="61.38" width="8.72" height="8.72" fill="#0b870b"/><rect x="26.88" y="61.38" width="8.72" height="8.72" fill="#00009a"/><rect x="35.50" y="61.38" width="8.72" height="8.72" fill="#000"/><rect x="44.12" y="61.38" width="8.72" height="8.72" fill="#9a9a9a"/><rect x="52.75" y="61.38" width="8.72" height="8.72" fill="#a00000"/><rect x="61.38" y="61.38" width="8.72" height="8.72" fill="#9a9a9a"/><path d="M1 9.6 L9.6 1 L9.6 9.6 Z" fill="#0b870b"/><path d="M70 9.6 L61.4 1 L61.4 9.6 Z" fill="#000"/><path d="M1 61.4 L9.6 70 L1 70 Z" fill="#9a9a9a"/><path d="M1 61.4 L9.6 70 L9.6 61.4 Z" fill="#000"/><path d="M70 61.4 L61.4 70 L70 70 Z" fill="#9a9a9a"/><path d="M70 61.4 L61.4 70 L61.4 61.4 Z" fill="#0b870b"/><path d="M1 10 L10 1 M61 1 L70 10 M1 61 L10 70 M70 61 L61 70" stroke="#fff" stroke-width="1"/><circle cx="35" cy="35" r="30.5" fill="#0a0a0c" stroke="#040404" stroke-width="2.5"/><defs><clipPath id="sc5"><circle cx="35" cy="35" r="28"/></clipPath></defs><g clip-path="url(#sc5)" opacity="0.22"><rect x="7.0" y="7.0" width="6.4" height="6.4" fill="#3a0000"/><rect x="13.3" y="7.0" width="6.4" height="6.4" fill="#303030"/><rect x="19.6" y="7.0" width="6.4" height="6.4" fill="#003a00"/><rect x="25.9" y="7.0" width="6.4" height="6.4" fill="#000"/><rect x="32.2" y="7.0" width="6.4" height="6.4" fill="#00003a"/><rect x="38.5" y="7.0" width="6.4" height="6.4" fill="#3a0000"/><rect x="44.8" y="7.0" width="6.4" height="6.4" fill="#303030"/><rect x="51.1" y="7.0" width="6.4" height="6.4" fill="#003a00"/><rect x="57.4" y="7.0" width="6.4" height="6.4" fill="#000"/><rect x="7.0" y="13.3" width="6.4" height="6.4" fill="#00003a"/><rect x="13.3" y="13.3" width="6.4" height="6.4" fill="#3a0000"/><rect x="19.6" y="13.3" width="6.4" height="6.4" fill="#303030"/><rect x="25.9" y="13.3" width="6.4" height="6.4" fill="#003a00"/><rect x="32.2" y="13.3" width="6.4" height="6.4" fill="#000"/><rect x="38.5" y="13.3" width="6.4" height="6.4" fill="#00003a"/><rect x="44.8" y="13.3" width="6.4" height="6.4" fill="#3a0000"/><rect x="51.1" y="13.3" width="6.4" height="6.4" fill="#303030"/><rect x="57.4" y="13.3" width="6.4" height="6.4" fill="#003a00"/><rect x="7.0" y="19.6" width="6.4" height="6.4" fill="#000"/><rect x="13.3" y="19.6" width="6.4" height="6.4" fill="#00003a"/><rect x="19.6" y="19.6" width="6.4" height="6.4" fill="#3a0000"/><rect x="25.9" y="19.6" width="6.4" height="6.4" fill="#303030"/><rect x="32.2" y="19.6" width="6.4" height="6.4" fill="#003a00"/><rect x="38.5" y="19.6" width="6.4" height="6.4" fill="#000"/><rect x="44.8" y="19.6" width="6.4" height="6.4" fill="#00003a"/><rect x="51.1" y="19.6" width="6.4" height="6.4" fill="#3a0000"/><rect x="57.4" y="19.6" width="6.4" height="6.4" fill="#303030"/><rect x="7.0" y="25.9" width="6.4" height="6.4" fill="#003a00"/><rect x="13.3" y="25.9" width="6.4" height="6.4" fill="#000"/><rect x="19.6" y="25.9" width="6.4" height="6.4" fill="#00003a"/><rect x="25.9" y="25.9" width="6.4" height="6.4" fill="#3a0000"/><rect x="32.2" y="25.9" width="6.4" height="6.4" fill="#303030"/><rect x="38.5" y="25.9" width="6.4" height="6.4" fill="#003a00"/><rect x="44.8" y="25.9" width="6.4" height="6.4" fill="#000"/><rect x="51.1" y="25.9" width="6.4" height="6.4" fill="#00003a"/><rect x="57.4" y="25.9" width="6.4" height="6.4" fill="#3a0000"/><rect x="7.0" y="32.2" width="6.4" height="6.4" fill="#303030"/><rect x="13.3" y="32.2" width="6.4" height="6.4" fill="#003a00"/><rect x="19.6" y="32.2" width="6.4" height="6.4" fill="#000"/><rect x="25.9" y="32.2" width="6.4" height="6.4" fill="#00003a"/><rect x="32.2" y="32.2" width="6.4" height="6.4" fill="#3a0000"/><rect x="38.5" y="32.2" width="6.4" height="6.4" fill="#303030"/><rect x="44.8" y="32.2" width="6.4" height="6.4" fill="#003a00"/><rect x="51.1" y="32.2" width="6.4" height="6.4" fill="#000"/><rect x="57.4" y="32.2" width="6.4" height="6.4" fill="#00003a"/><rect x="7.0" y="38.5" width="6.4" height="6.4" fill="#3a0000"/><rect x="13.3" y="38.5" width="6.4" height="6.4" fill="#303030"/><rect x="19.6" y="38.5" width="6.4" height="6.4" fill="#003a00"/><rect x="25.9" y="38.5" width="6.4" height="6.4" fill="#000"/><rect x="32.2" y="38.5" width="6.4" height="6.4" fill="#00003a"/><rect x="38.5" y="38.5" width="6.4" height="6.4" fill="#3a0000"/><rect x="44.8" y="38.5" width="6.4" height="6.4" fill="#303030"/><rect x="51.1" y="38.5" width="6.4" height="6.4" fill="#003a00"/><rect x="57.4" y="38.5" width="6.4" height="6.4" fill="#000"/><rect x="7.0" y="44.8" width="6.4" height="6.4" fill="#00003a"/><rect x="13.3" y="44.8" width="6.4" height="6.4" fill="#3a0000"/><rect x="19.6" y="44.8" width="6.4" height="6.4" fill="#303030"/><rect x="25.9" y="44.8" width="6.4" height="6.4" fill="#003a00"/><rect x="32.2" y="44.8" width="6.4" height="6.4" fill="#000"/><rect x="38.5" y="44.8" width="6.4" height="6.4" fill="#00003a"/><rect x="44.8" y="44.8" width="6.4" height="6.4" fill="#3a0000"/><rect x="51.1" y="44.8" width="6.4" height="6.4" fill="#303030"/><rect x="57.4" y="44.8" width="6.4" height="6.4" fill="#003a00"/><rect x="7.0" y="51.1" width="6.4" height="6.4" fill="#000"/><rect x="13.3" y="51.1" width="6.4" height="6.4" fill="#00003a"/><rect x="19.6" y="51.1" width="6.4" height="6.4" fill="#3a0000"/><rect x="25.9" y="51.1" width="6.4" height="6.4" fill="#303030"/><rect x="32.2" y="51.1" width="6.4" height="6.4" fill="#003a00"/><rect x="38.5" y="51.1" width="6.4" height="6.4" fill="#000"/><rect x="44.8" y="51.1" width="6.4" height="6.4" fill="#00003a"/><rect x="51.1" y="51.1" width="6.4" height="6.4" fill="#3a0000"/><rect x="57.4" y="51.1" width="6.4" height="6.4" fill="#303030"/><rect x="7.0" y="57.4" width="6.4" height="6.4" fill="#003a00"/><rect x="13.3" y="57.4" width="6.4" height="6.4" fill="#000"/><rect x="19.6" y="57.4" width="6.4" height="6.4" fill="#00003a"/><rect x="25.9" y="57.4" width="6.4" height="6.4" fill="#3a0000"/><rect x="32.2" y="57.4" width="6.4" height="6.4" fill="#303030"/><rect x="38.5" y="57.4" width="6.4" height="6.4" fill="#003a00"/><rect x="44.8" y="57.4" width="6.4" height="6.4" fill="#000"/><rect x="51.1" y="57.4" width="6.4" height="6.4" fill="#00003a"/><rect x="57.4" y="57.4" width="6.4" height="6.4" fill="#3a0000"/></g><circle cx="25" cy="25" r="2.1" fill="#fff"/><path d="M53 55 L56 52" stroke="#fff" stroke-width="2.2" stroke-linecap="round"/></svg>
<svg class="a" style="left:84px;top:5px" width="70" height="70" viewBox="0 0 71 71"><rect width="71" height="71" fill="#fff"/><rect x="1.00" y="1.00" width="8.72" height="8.72" fill="#9a9a9a"/><rect x="9.62" y="1.00" width="8.72" height="8.72" fill="#00009a"/><rect x="18.25" y="1.00" width="8.72" height="8.72" fill="#000"/><rect x="26.88" y="1.00" width="8.72" height="8.72" fill="#9a9a9a"/><rect x="35.50" y="1.00" width="8.72" height="8.72" fill="#a00000"/><rect x="44.12" y="1.00" width="8.72" height="8.72" fill="#0b870b"/><rect x="52.75" y="1.00" width="8.72" height="8.72" fill="#00009a"/><rect x="61.38" y="1.00" width="8.72" height="8.72" fill="#9a9a9a"/><rect x="1.00" y="9.62" width="8.72" height="8.72" fill="#a00000"/><rect x="9.62" y="9.62" width="8.72" height="8.72" fill="#0b870b"/><rect x="18.25" y="9.62" width="8.72" height="8.72" fill="#0b870b"/><rect x="26.88" y="9.62" width="8.72" height="8.72" fill="#000"/><rect x="35.50" y="9.62" width="8.72" height="8.72" fill="#a00000"/><rect x="44.12" y="9.62" width="8.72" height="8.72" fill="#00009a"/><rect x="52.75" y="9.62" width="8.72" height="8.72" fill="#0b870b"/><rect x="61.38" y="9.62" width="8.72" height="8.72" fill="#00009a"/><rect x="1.00" y="18.25" width="8.72" height="8.72" fill="#9a9a9a"/><rect x="9.62" y="18.25" width="8.72" height="8.72" fill="#a00000"/><rect x="18.25" y="18.25" width="8.72" height="8.72" fill="#00009a"/><rect x="26.88" y="18.25" width="8.72" height="8.72" fill="#9a9a9a"/><rect x="35.50" y="18.25" width="8.72" height="8.72" fill="#0b870b"/><rect x="44.12" y="18.25" width="8.72" height="8.72" fill="#000"/><rect x="52.75" y="18.25" width="8.72" height="8.72" fill="#a00000"/><rect x="61.38" y="18.25" width="8.72" height="8.72" fill="#0b870b"/><rect x="1.00" y="26.88" width="8.72" height="8.72" fill="#000"/><rect x="9.62" y="26.88" width="8.72" height="8.72" fill="#0b870b"/><rect x="18.25" y="26.88" width="8.72" height="8.72" fill="#000"/><rect x="26.88" y="26.88" width="8.72" height="8.72" fill="#a00000"/><rect x="35.50" y="26.88" width="8.72" height="8.72" fill="#00009a"/><rect x="44.12" y="26.88" width="8.72" height="8.72" fill="#9a9a9a"/><rect x="52.75" y="26.88" width="8.72" height="8.72" fill="#0b870b"/><rect x="61.38" y="26.88" width="8.72" height="8.72" fill="#a00000"/><rect x="1.00" y="35.50" width="8.72" height="8.72" fill="#00009a"/><rect x="9.62" y="35.50" width="8.72" height="8.72" fill="#00009a"/><rect x="18.25" y="35.50" width="8.72" height="8.72" fill="#9a9a9a"/><rect x="26.88" y="35.50" width="8.72" height="8.72" fill="#0b870b"/><rect x="35.50" y="35.50" width="8.72" height="8.72" fill="#000"/><rect x="44.12" y="35.50" width="8.72" height="8.72" fill="#a00000"/><rect x="52.75" y="35.50" width="8.72" height="8.72" fill="#00009a"/><rect x="61.38" y="35.50" width="8.72" height="8.72" fill="#9a9a9a"/><rect x="1.00" y="44.12" width="8.72" height="8.72" fill="#0b870b"/><rect x="9.62" y="44.12" width="8.72" height="8.72" fill="#000"/><rect x="18.25" y="44.12" width="8.72" height="8.72" fill="#a00000"/><rect x="26.88" y="44.12" width="8.72" height="8.72" fill="#00009a"/><rect x="35.50" y="44.12" width="8.72" height="8.72" fill="#9a9a9a"/><rect x="44.12" y="44.12" width="8.72" height="8.72" fill="#0b870b"/><rect x="52.75" y="44.12" width="8.72" height="8.72" fill="#000"/><rect x="61.38" y="44.12" width="8.72" height="8.72" fill="#000"/><rect x="1.00" y="52.75" width="8.72" height="8.72" fill="#a00000"/><rect x="9.62" y="52.75" width="8.72" height="8.72" fill="#0b870b"/><rect x="18.25" y="52.75" width="8.72" height="8.72" fill="#0b870b"/><rect x="26.88" y="52.75" width="8.72" height="8.72" fill="#000"/><rect x="35.50" y="52.75" width="8.72" height="8.72" fill="#a00000"/><rect x="44.12" y="52.75" width="8.72" height="8.72" fill="#00009a"/><rect x="52.75" y="52.75" width="8.72" height="8.72" fill="#0b870b"/><rect x="61.38" y="52.75" width="8.72" height="8.72" fill="#00009a"/><rect x="1.00" y="61.38" width="8.72" height="8.72" fill="#9a9a9a"/><rect x="9.62" y="61.38" width="8.72" height="8.72" fill="#a00000"/><rect x="18.25" y="61.38" width="8.72" height="8.72" fill="#0b870b"/><rect x="26.88" y="61.38" width="8.72" height="8.72" fill="#00009a"/><rect x="35.50" y="61.38" width="8.72" height="8.72" fill="#000"/><rect x="44.12" y="61.38" width="8.72" height="8.72" fill="#9a9a9a"/><rect x="52.75" y="61.38" width="8.72" height="8.72" fill="#a00000"/><rect x="61.38" y="61.38" width="8.72" height="8.72" fill="#9a9a9a"/><path d="M1 9.6 L9.6 1 L9.6 9.6 Z" fill="#0b870b"/><path d="M70 9.6 L61.4 1 L61.4 9.6 Z" fill="#000"/><path d="M1 61.4 L9.6 70 L1 70 Z" fill="#9a9a9a"/><path d="M1 61.4 L9.6 70 L9.6 61.4 Z" fill="#000"/><path d="M70 61.4 L61.4 70 L70 70 Z" fill="#9a9a9a"/><path d="M70 61.4 L61.4 70 L61.4 61.4 Z" fill="#0b870b"/><path d="M1 10 L10 1 M61 1 L70 10 M1 61 L10 70 M70 61 L61 70" stroke="#fff" stroke-width="1"/><circle cx="35" cy="35" r="30.5" fill="#0a0a0c" stroke="#040404" stroke-width="2.5"/><defs><clipPath id="sc84"><circle cx="35" cy="35" r="28"/></clipPath></defs><g clip-path="url(#sc84)" opacity="0.22"><rect x="7.0" y="7.0" width="6.4" height="6.4" fill="#3a0000"/><rect x="13.3" y="7.0" width="6.4" height="6.4" fill="#303030"/><rect x="19.6" y="7.0" width="6.4" height="6.4" fill="#003a00"/><rect x="25.9" y="7.0" width="6.4" height="6.4" fill="#000"/><rect x="32.2" y="7.0" width="6.4" height="6.4" fill="#00003a"/><rect x="38.5" y="7.0" width="6.4" height="6.4" fill="#3a0000"/><rect x="44.8" y="7.0" width="6.4" height="6.4" fill="#303030"/><rect x="51.1" y="7.0" width="6.4" height="6.4" fill="#003a00"/><rect x="57.4" y="7.0" width="6.4" height="6.4" fill="#000"/><rect x="7.0" y="13.3" width="6.4" height="6.4" fill="#00003a"/><rect x="13.3" y="13.3" width="6.4" height="6.4" fill="#3a0000"/><rect x="19.6" y="13.3" width="6.4" height="6.4" fill="#303030"/><rect x="25.9" y="13.3" width="6.4" height="6.4" fill="#003a00"/><rect x="32.2" y="13.3" width="6.4" height="6.4" fill="#000"/><rect x="38.5" y="13.3" width="6.4" height="6.4" fill="#00003a"/><rect x="44.8" y="13.3" width="6.4" height="6.4" fill="#3a0000"/><rect x="51.1" y="13.3" width="6.4" height="6.4" fill="#303030"/><rect x="57.4" y="13.3" width="6.4" height="6.4" fill="#003a00"/><rect x="7.0" y="19.6" width="6.4" height="6.4" fill="#000"/><rect x="13.3" y="19.6" width="6.4" height="6.4" fill="#00003a"/><rect x="19.6" y="19.6" width="6.4" height="6.4" fill="#3a0000"/><rect x="25.9" y="19.6" width="6.4" height="6.4" fill="#303030"/><rect x="32.2" y="19.6" width="6.4" height="6.4" fill="#003a00"/><rect x="38.5" y="19.6" width="6.4" height="6.4" fill="#000"/><rect x="44.8" y="19.6" width="6.4" height="6.4" fill="#00003a"/><rect x="51.1" y="19.6" width="6.4" height="6.4" fill="#3a0000"/><rect x="57.4" y="19.6" width="6.4" height="6.4" fill="#303030"/><rect x="7.0" y="25.9" width="6.4" height="6.4" fill="#003a00"/><rect x="13.3" y="25.9" width="6.4" height="6.4" fill="#000"/><rect x="19.6" y="25.9" width="6.4" height="6.4" fill="#00003a"/><rect x="25.9" y="25.9" width="6.4" height="6.4" fill="#3a0000"/><rect x="32.2" y="25.9" width="6.4" height="6.4" fill="#303030"/><rect x="38.5" y="25.9" width="6.4" height="6.4" fill="#003a00"/><rect x="44.8" y="25.9" width="6.4" height="6.4" fill="#000"/><rect x="51.1" y="25.9" width="6.4" height="6.4" fill="#00003a"/><rect x="57.4" y="25.9" width="6.4" height="6.4" fill="#3a0000"/><rect x="7.0" y="32.2" width="6.4" height="6.4" fill="#303030"/><rect x="13.3" y="32.2" width="6.4" height="6.4" fill="#003a00"/><rect x="19.6" y="32.2" width="6.4" height="6.4" fill="#000"/><rect x="25.9" y="32.2" width="6.4" height="6.4" fill="#00003a"/><rect x="32.2" y="32.2" width="6.4" height="6.4" fill="#3a0000"/><rect x="38.5" y="32.2" width="6.4" height="6.4" fill="#303030"/><rect x="44.8" y="32.2" width="6.4" height="6.4" fill="#003a00"/><rect x="51.1" y="32.2" width="6.4" height="6.4" fill="#000"/><rect x="57.4" y="32.2" width="6.4" height="6.4" fill="#00003a"/><rect x="7.0" y="38.5" width="6.4" height="6.4" fill="#3a0000"/><rect x="13.3" y="38.5" width="6.4" height="6.4" fill="#303030"/><rect x="19.6" y="38.5" width="6.4" height="6.4" fill="#003a00"/><rect x="25.9" y="38.5" width="6.4" height="6.4" fill="#000"/><rect x="32.2" y="38.5" width="6.4" height="6.4" fill="#00003a"/><rect x="38.5" y="38.5" width="6.4" height="6.4" fill="#3a0000"/><rect x="44.8" y="38.5" width="6.4" height="6.4" fill="#303030"/><rect x="51.1" y="38.5" width="6.4" height="6.4" fill="#003a00"/><rect x="57.4" y="38.5" width="6.4" height="6.4" fill="#000"/><rect x="7.0" y="44.8" width="6.4" height="6.4" fill="#00003a"/><rect x="13.3" y="44.8" width="6.4" height="6.4" fill="#3a0000"/><rect x="19.6" y="44.8" width="6.4" height="6.4" fill="#303030"/><rect x="25.9" y="44.8" width="6.4" height="6.4" fill="#003a00"/><rect x="32.2" y="44.8" width="6.4" height="6.4" fill="#000"/><rect x="38.5" y="44.8" width="6.4" height="6.4" fill="#00003a"/><rect x="44.8" y="44.8" width="6.4" height="6.4" fill="#3a0000"/><rect x="51.1" y="44.8" width="6.4" height="6.4" fill="#303030"/><rect x="57.4" y="44.8" width="6.4" height="6.4" fill="#003a00"/><rect x="7.0" y="51.1" width="6.4" height="6.4" fill="#000"/><rect x="13.3" y="51.1" width="6.4" height="6.4" fill="#00003a"/><rect x="19.6" y="51.1" width="6.4" height="6.4" fill="#3a0000"/><rect x="25.9" y="51.1" width="6.4" height="6.4" fill="#303030"/><rect x="32.2" y="51.1" width="6.4" height="6.4" fill="#003a00"/><rect x="38.5" y="51.1" width="6.4" height="6.4" fill="#000"/><rect x="44.8" y="51.1" width="6.4" height="6.4" fill="#00003a"/><rect x="51.1" y="51.1" width="6.4" height="6.4" fill="#3a0000"/><rect x="57.4" y="51.1" width="6.4" height="6.4" fill="#303030"/><rect x="7.0" y="57.4" width="6.4" height="6.4" fill="#003a00"/><rect x="13.3" y="57.4" width="6.4" height="6.4" fill="#000"/><rect x="19.6" y="57.4" width="6.4" height="6.4" fill="#00003a"/><rect x="25.9" y="57.4" width="6.4" height="6.4" fill="#3a0000"/><rect x="32.2" y="57.4" width="6.4" height="6.4" fill="#303030"/><rect x="38.5" y="57.4" width="6.4" height="6.4" fill="#003a00"/><rect x="44.8" y="57.4" width="6.4" height="6.4" fill="#000"/><rect x="51.1" y="57.4" width="6.4" height="6.4" fill="#00003a"/><rect x="57.4" y="57.4" width="6.4" height="6.4" fill="#3a0000"/></g><circle cx="25" cy="25" r="2.1" fill="#fff"/><path d="M53 55 L56 52" stroke="#fff" stroke-width="2.2" stroke-linecap="round"/></svg>
<div class="a" style="left:63px;top:77px;width:13px;height:12px;background:#a00000"></div>
<div class="a" style="left:6px;top:74px;font-size:12px;line-height:16px;color:#c8dcff;white-space:nowrap">17 - Default</div>
<div class="a" style="left:89px;top:74px;font-size:12px;line-height:16px;color:#f0f0f0;white-space:nowrap">外窗金属</div>
<div class="a" style="left:142px;top:0;width:9px;height:90px;background:#2e2e2e;border-left:1px solid #0d0d0d"></div>
<div class="a" style="left:143px;top:1px;width:8px;height:22px;background:linear-gradient(90deg,#aaa,#666);border:1px solid #333"></div>
<div class="a" style="left:145px;top:9px;width:5px;height:1px;background:#222;box-shadow:0 3px 0 #222,0 6px 0 #222"></div>
</div>
<div class="a" style="left:182px;top:23px;width:1015px;height:23px;background:#444"></div>
<div class="a" style="left:183px;top:24px;width:70px;height:18px;background:#434343;border-top:1px solid #999;border-left:1px solid #222"></div>
<div class="a" style="left:192px;top:25px;font-size:12px;font-style:italic;font-weight:bold;color:#e8e8e8;text-shadow:1px 1px 0 #111;white-space:nowrap">视图 1</div>
<div class="a" style="left:253px;top:23px;width:944px;height:19px;background:#474747;border-top:1px solid #2a2a2a;border-left:1px solid #2e2e2e;border-bottom:1px solid #2a2a2a"></div>
<div class="a" style="left:182px;top:46px;width:1015px;height:1px;background:#1e1e1e"></div>
<svg class="a" style="left:0;top:0" width="1197" height="939"><rect x="182" y="47" width="1015" height="892" fill="#434343"/><path d="M190.5 47V939M204.5 47V939M218.5 47V939M232.5 47V939M246.5 47V939M260.5 47V939M275.5 47V939M289.5 47V939M303.5 47V939M317.5 47V939M331.5 47V939M345.5 47V939M359.5 47V939M373.5 47V939M387.5 47V939M401.5 47V939M415.5 47V939M430.5 47V939M444.5 47V939M458.5 47V939M472.5 47V939M486.5 47V939M500.5 47V939M514.5 47V939M528.5 47V939M542.5 47V939M556.5 47V939M570.5 47V939M585.5 47V939M599.5 47V939M613.5 47V939M627.5 47V939M641.5 47V939M655.5 47V939M669.5 47V939M683.5 47V939M697.5 47V939M711.5 47V939M725.5 47V939M740.5 47V939M754.5 47V939M768.5 47V939M782.5 47V939M796.5 47V939M810.5 47V939M824.5 47V939M838.5 47V939M852.5 47V939M866.5 47V939M880.5 47V939M895.5 47V939M909.5 47V939M923.5 47V939M937.5 47V939M951.5 47V939M965.5 47V939M979.5 47V939M993.5 47V939M1007.5 47V939M1021.5 47V939M1035.5 47V939M1049.5 47V939M1064.5 47V939M1078.5 47V939M1092.5 47V939M1106.5 47V939M1120.5 47V939M1134.5 47V939M1148.5 47V939M1162.5 47V939M1176.5 47V939M1190.5 47V939M182 50.5H1197M182 64.5H1197M182 78.5H1197M182 92.5H1197M182 106.5H1197M182 120.5H1197M182 135.5H1197M182 149.5H1197M182 163.5H1197M182 177.5H1197M182 191.5H1197M182 205.5H1197M182 219.5H1197M182 233.5H1197M182 247.5H1197M182 261.5H1197M182 275.5H1197M182 290.5H1197M182 304.5H1197M182 318.5H1197M182 332.5H1197M182 346.5H1197M182 360.5H1197M182 374.5H1197M182 388.5H1197M182 402.5H1197M182 416.5H1197M182 430.5H1197M182 445.5H1197M182 459.5H1197M182 473.5H1197M182 487.5H1197M182 501.5H1197M182 515.5H1197M182 529.5H1197M182 543.5H1197M182 557.5H1197M182 571.5H1197M182 585.5H1197M182 600.5H1197M182 614.5H1197M182 628.5H1197M182 642.5H1197M182 656.5H1197M182 670.5H1197M182 684.5H1197M182 698.5H1197M182 712.5H1197M182 726.5H1197M182 740.5H1197M182 755.5H1197M182 769.5H1197M182 783.5H1197M182 797.5H1197M182 811.5H1197M182 825.5H1197M182 839.5H1197M182 853.5H1197M182 867.5H1197M182 881.5H1197M182 895.5H1197M182 909.5H1197M182 924.5H1197M182 938.5H1197" stroke="#4c4c4c" stroke-width="1"/></svg>
<div class="a" style="left:711px;top:165px;width:8px;height:145px;background:#3c6a8c;border:1px solid #e6eaee;border-left:none;border-radius:0 4px 4px 0"></div>
<div class="a" style="left:613px;top:93px;width:100px;height:288.5px;background:#b3bcc5;border:1.5px solid #eef1f3;border-radius:2px 5px 2px 4px;overflow:hidden">
<div class="a" style="left:0;top:0;width:97px;height:27px;background:linear-gradient(#2d526d,#33607d);border-radius:1px 4px 0 0"></div>
<div class="a" style="left:2px;top:1.5px;width:24px;height:24px"><svg width="24" height="24" viewBox="0 0 24 24" style="position:absolute;left:0;top:0;width:23px;height:23px"><rect x="0.5" y="0.5" width="23" height="23" fill="#3a3a3a" stroke="#e0e0e0" stroke-width="1"/><circle cx="12" cy="12" r="10.6" fill="#170800"/><circle cx="8" cy="8" r="2" fill="#ff6a00" opacity="0.9"/><ellipse cx="16.5" cy="16.5" rx="2.6" ry="1.3" transform="rotate(-40 16.5 16.5)" fill="#ff8c10"/></svg></div>
<div class="a" style="left:27px;top:2px;font-size:8.5px;font-weight:bold;color:#fff;line-height:12px;white-space:nowrap">Material #27<br>VRayMtl</div>
<div class="a" style="left:85px;top:7px;width:7px;height:2px;background:#8aa0b3"></div>
<div class="lb" style="top:27.90px;height:13.40px;line-height:13.40px">漫反射贴图</div>
<div class="a" style="left:1px;top:40.10px;width:95px;height:1px;background:#98a1aa"></div>
<div class="a" style="left:1px;top:41.10px;width:95px;height:1px;background:#cdd4db"></div>
<div class="lb" style="top:41.30px;height:13.40px;line-height:13.40px">反射贴图</div>
<div class="a" style="left:1px;top:53.50px;width:95px;height:1px;background:#98a1aa"></div>
<div class="a" style="left:1px;top:54.50px;width:95px;height:1px;background:#cdd4db"></div>
<div class="lb" style="top:54.70px;height:13.40px;line-height:13.40px">折射贴图</div>
<div class="a" style="left:1px;top:66.90px;width:95px;height:1px;background:#98a1aa"></div>
<div class="a" style="left:1px;top:67.90px;width:95px;height:1px;background:#cdd4db"></div>
<div class="lb" style="top:68.10px;height:13.40px;line-height:13.40px">凹凸贴图</div>
<div class="a" style="left:1px;top:80.30px;width:95px;height:1px;background:#98a1aa"></div>
<div class="a" style="left:1px;top:81.30px;width:95px;height:1px;background:#cdd4db"></div>
<div class="lb" style="top:81.50px;height:13.40px;line-height:13.40px">反射光泽度</div>
<div class="a" style="left:1px;top:93.70px;width:95px;height:1px;background:#98a1aa"></div>
<div class="a" style="left:1px;top:94.70px;width:95px;height:1px;background:#cdd4db"></div>
<div class="lb" style="top:94.90px;height:13.40px;line-height:13.40px">折射光泽度</div>
<div class="a" style="left:1px;top:107.10px;width:95px;height:1px;background:#98a1aa"></div>
<div class="a" style="left:1px;top:108.10px;width:95px;height:1px;background:#cdd4db"></div>
<div class="lb" style="top:108.30px;height:13.40px;line-height:13.40px">置换</div>
<div class="a" style="left:1px;top:120.50px;width:95px;height:1px;background:#98a1aa"></div>
<div class="a" style="left:1px;top:121.50px;width:95px;height:1px;background:#cdd4db"></div>
<div class="lb" style="top:121.70px;height:13.40px;line-height:13.40px">环境</div>
<div class="a" style="left:1px;top:133.90px;width:95px;height:1px;background:#98a1aa"></div>
<div class="a" style="left:1px;top:134.90px;width:95px;height:1px;background:#cdd4db"></div>
<div class="lb" style="top:135.10px;height:13.40px;line-height:13.40px">半透明</div>
<div class="a" style="left:1px;top:147.30px;width:95px;height:1px;background:#98a1aa"></div>
<div class="a" style="left:1px;top:148.30px;width:95px;height:1px;background:#cdd4db"></div>
<div class="lb" style="top:148.50px;height:13.40px;line-height:13.40px">IOR</div>
<div class="a" style="left:1px;top:160.70px;width:95px;height:1px;background:#98a1aa"></div>
<div class="a" style="left:1px;top:161.70px;width:95px;height:1px;background:#cdd4db"></div>
<div class="lb" style="top:161.90px;height:13.40px;line-height:13.40px">高光光泽度</div>
<div class="a" style="left:1px;top:174.10px;width:95px;height:1px;background:#98a1aa"></div>
<div class="a" style="left:1px;top:175.10px;width:95px;height:1px;background:#cdd4db"></div>
<div class="lb" style="top:175.30px;height:13.40px;line-height:13.40px">菲涅耳折射率(IOR)</div>
<div class="a" style="left:1px;top:187.50px;width:95px;height:1px;background:#98a1aa"></div>
<div class="a" style="left:1px;top:188.50px;width:95px;height:1px;background:#cdd4db"></div>
<div class="lb" style="top:188.70px;height:13.40px;line-height:13.40px">不透明</div>
<div class="a" style="left:1px;top:200.90px;width:95px;height:1px;background:#98a1aa"></div>
<div class="a" style="left:1px;top:201.90px;width:95px;height:1px;background:#cdd4db"></div>
<div class="lb" style="top:202.10px;height:13.40px;line-height:13.40px">粗糙度</div>
<div class="a" style="left:1px;top:214.30px;width:95px;height:1px;background:#98a1aa"></div>
<div class="a" style="left:1px;top:215.30px;width:95px;height:1px;background:#cdd4db"></div>
<div class="lb" style="top:215.50px;height:13.40px;line-height:13.40px">各向异性</div>
<div class="a" style="left:1px;top:227.70px;width:95px;height:1px;background:#98a1aa"></div>
<div class="a" style="left:1px;top:228.70px;width:95px;height:1px;background:#cdd4db"></div>
<div class="lb" style="top:228.90px;height:13.40px;line-height:13.40px">各向异性旋转</div>
<div class="a" style="left:1px;top:241.10px;width:95px;height:1px;background:#98a1aa"></div>
<div class="a" style="left:1px;top:242.10px;width:95px;height:1px;background:#cdd4db"></div>
<div class="lb" style="top:242.30px;height:13.40px;line-height:13.40px">雾颜色</div>
<div class="a" style="left:1px;top:254.50px;width:95px;height:1px;background:#98a1aa"></div>
<div class="a" style="left:1px;top:255.50px;width:95px;height:1px;background:#cdd4db"></div>
<div class="lb" style="top:255.70px;height:13.40px;line-height:13.40px">自发光</div>
<div class="a" style="left:0;top:270.00px;width:97px;height:1px;background:#98a1aa"></div>
<div class="a" style="left:0;top:271.00px;width:97px;height:1px;background:#d2d8de"></div>
<div class="a" style="left:0;top:272.00px;width:97px;height:5.7px;background:linear-gradient(#a6aeb7,#cdd3d9)"></div>
<div class="a" style="left:31.5px;top:270.70px;font-size:7.8px;font-weight:bold;line-height:10px;color:#333344;white-space:nowrap">mr 连接</div>
<svg class="a" style="left:87.5px;top:272.20px" width="6" height="6"><path d="M3 0.5 V5.5 M0.5 3 H5.5" stroke="#7a858f" stroke-width="1.6"/></svg>
<div class="a" style="left:0;top:277.70px;width:97px;height:1px;background:#e0e5e9"></div>
<div class="a" style="left:0;top:278.70px;width:97px;height:9px;background:linear-gradient(#a8b1b9,#bcc3ca 45%,#9ea7af)"></div>
</div>
<svg class="a" style="left:706.5px;top:375.0px" width="7" height="7"><path d="M7 0 L7 7 L0 7 Z" fill="#434343"/><path d="M6.3 0.5 L0.5 6.3" stroke="#eef1f3" stroke-width="1.4"/></svg>
<svg class="a" style="left:701px;top:374.0px" width="9" height="6"><path d="M2 5 L6 1 M4.5 5 L8.5 1" stroke="#6e7880" stroke-width="0.8" stroke-dasharray="1 0.8"/></svg>
<div class="sk" style="left:609px;top:124.10px"></div>
<div class="sk" style="left:609px;top:137.50px"></div>
<div class="sk" style="left:609px;top:150.90px"></div>
<div class="sk" style="left:609px;top:164.30px"></div>
<div class="sk" style="left:609px;top:177.70px"></div>
<div class="sk" style="left:609px;top:191.10px"></div>
<div class="sk" style="left:609px;top:204.50px"></div>
<div class="sk" style="left:609px;top:217.90px"></div>
<div class="sk" style="left:609px;top:231.30px"></div>
<div class="sk" style="left:609px;top:244.70px"></div>
<div class="sk" style="left:609px;top:258.10px"></div>
<div class="sk" style="left:609px;top:271.50px"></div>
<div class="sk" style="left:609px;top:284.90px"></div>
<div class="sk" style="left:609px;top:298.30px"></div>
<div class="sk" style="left:609px;top:311.70px"></div>
<div class="sk" style="left:609px;top:325.10px"></div>
<div class="sk" style="left:609px;top:338.50px"></div>
<div class="sk" style="left:609px;top:351.90px"></div>
<div class="sky" style="left:714px;top:232.5px"></div>
<div class="a" style="left:711px;top:475px;width:8px;height:145px;background:#3c6a8c;border:1px solid #e6eaee;border-left:none;border-radius:0 4px 4px 0"></div>
<div class="a" style="left:613px;top:403px;width:100px;height:288.5px;background:#b3bcc5;border:1.5px solid #eef1f3;border-radius:2px 5px 2px 4px;overflow:hidden">
<div class="a" style="left:0;top:0;width:97px;height:27px;background:linear-gradient(#2d526d,#33607d);border-radius:1px 4px 0 0"></div>
<div class="a" style="left:2px;top:1.5px;width:24px;height:24px"><svg width="24" height="24" viewBox="0 0 24 24" style="position:absolute;left:0;top:0;width:23px;height:23px"><rect x="0.5" y="0.5" width="23" height="23" fill="#3a3a3a" stroke="#e0e0e0" stroke-width="1"/><rect x="1.00" y="1.00" width="2.05" height="2.05" fill="#0b870b"/><rect x="3.00" y="1.00" width="2.05" height="2.05" fill="#000"/><rect x="5.00" y="1.00" width="2.05" height="2.05" fill="#a00000"/><rect x="7.00" y="1.00" width="2.05" height="2.05" fill="#00009a"/><rect x="9.00" y="1.00" width="2.05" height="2.05" fill="#9a9a9a"/><rect x="11.00" y="1.00" width="2.05" height="2.05" fill="#0b870b"/><rect x="13.00" y="1.00" width="2.05" height="2.05" fill="#000"/><rect x="15.00" y="1.00" width="2.05" height="2.05" fill="#a00000"/><rect x="17.00" y="1.00" width="2.05" height="2.05" fill="#00009a"/><rect x="19.00" y="1.00" width="2.05" height="2.05" fill="#9a9a9a"/><rect x="21.00" y="1.00" width="2.05" height="2.05" fill="#0b870b"/><rect x="1.00" y="3.00" width="2.05" height="2.05" fill="#9a9a9a"/><rect x="3.00" y="3.00" width="2.05" height="2.05" fill="#0b870b"/><rect x="5.00" y="3.00" width="2.05" height="2.05" fill="#000"/><rect x="7.00" y="3.00" width="2.05" height="2.05" fill="#a00000"/><rect x="9.00" y="3.00" width="2.05" height="2.05" fill="#00009a"/><rect x="11.00" y="3.00" width="2.05" height="2.05" fill="#9a9a9a"/><rect x="13.00" y="3.00" width="2.05" height="2.05" fill="#0b870b"/><rect x="15.00" y="3.00" width="2.05" height="2.05" fill="#000"/><rect x="17.00" y="3.00" width="2.05" height="2.05" fill="#a00000"/><rect x="19.00" y="3.00" width="2.05" height="2.05" fill="#00009a"/><rect x="21.00" y="3.00" width="2.05" height="2.05" fill="#9a9a9a"/><rect x="1.00" y="5.00" width="2.05" height="2.05" fill="#00009a"/><rect x="3.00" y="5.00" width="2.05" height="2.05" fill="#9a9a9a"/><rect x="5.00" y="5.00" width="2.05" height="2.05" fill="#0b870b"/><rect x="7.00" y="5.00" width="2.05" height="2.05" fill="#000"/><rect x="9.00" y="5.00" width="2.05" height="2.05" fill="#a00000"/><rect x="11.00" y="5.00" width="2.05" height="2.05" fill="#00009a"/><rect x="13.00" y="5.00" width="2.05" height="2.05" fill="#9a9a9a"/><rect x="15.00" y="5.00" width="2.05" height="2.05" fill="#0b870b"/><rect x="17.00" y="5.00" width="2.05" height="2.05" fill="#000"/><rect x="19.00" y="5.00" width="2.05" height="2.05" fill="#a00000"/><rect x="21.00" y="5.00" width="2.05" height="2.05" fill="#00009a"/><rect x="1.00" y="7.00" width="2.05" height="2.05" fill="#a00000"/><rect x="3.00" y="7.00" width="2.05" height="2.05" fill="#00009a"/><rect x="5.00" y="7.00" width="2.05" height="2.05" fill="#9a9a9a"/><rect x="7.00" y="7.00" width="2.05" height="2.05" fill="#0b870b"/><rect x="9.00" y="7.00" width="2.05" height="2.05" fill="#000"/><rect x="11.00" y="7.00" width="2.05" height="2.05" fill="#a00000"/><rect x="13.00" y="7.00" width="2.05" height="2.05" fill="#00009a"/><rect x="15.00" y="7.00" width="2.05" height="2.05" fill="#9a9a9a"/><rect x="17.00" y="7.00" width="2.05" height="2.05" fill="#0b870b"/><rect x="19.00" y="7.00" width="2.05" height="2.05" fill="#000"/><rect x="21.00" y="7.00" width="2.05" height="2.05" fill="#a00000"/><rect x="1.00" y="9.00" width="2.05" height="2.05" fill="#000"/><rect x="3.00" y="9.00" width="2.05" height="2.05" fill="#a00000"/><rect x="5.00" y="9.00" width="2.05" height="2.05" fill="#00009a"/><rect x="7.00" y="9.00" width="2.05" height="2.05" fill="#9a9a9a"/><rect x="9.00" y="9.00" width="2.05" height="2.05" fill="#0b870b"/><rect x="11.00" y="9.00" width="2.05" height="2.05" fill="#000"/><rect x="13.00" y="9.00" width="2.05" height="2.05" fill="#a00000"/><rect x="15.00" y="9.00" width="2.05" height="2.05" fill="#00009a"/><rect x="17.00" y="9.00" width="2.05" height="2.05" fill="#9a9a9a"/><rect x="19.00" y="9.00" width="2.05" height="2.05" fill="#0b870b"/><rect x="21.00" y="9.00" width="2.05" height="2.05" fill="#000"/><rect x="1.00" y="11.00" width="2.05" height="2.05" fill="#0b870b"/><rect x="3.00" y="11.00" width="2.05" height="2.05" fill="#000"/><rect x="5.00" y="11.00" width="2.05" height="2.05" fill="#a00000"/><rect x="7.00" y="11.00" width="2.05" height="2.05" fill="#00009a"/><rect x="9.00" y="11.00" width="2.05" height="2.05" fill="#9a9a9a"/><rect x="11.00" y="11.00" width="2.05" height="2.05" fill="#0b870b"/><rect x="13.00" y="11.00" width="2.05" height="2.05" fill="#000"/><rect x="15.00" y="11.00" width="2.05" height="2.05" fill="#a00000"/><rect x="17.00" y="11.00" width="2.05" height="2.05" fill="#00009a"/><rect x="19.00" y="11.00" width="2.05" height="2.05" fill="#9a9a9a"/><rect x="21.00" y="11.00" width="2.05" height="2.05" fill="#0b870b"/><rect x="1.00" y="13.00" width="2.05" height="2.05" fill="#9a9a9a"/><rect x="3.00" y="13.00" width="2.05" height="2.05" fill="#0b870b"/><rect x="5.00" y="13.00" width="2.05" height="2.05" fill="#000"/><rect x="7.00" y="13.00" width="2.05" height="2.05" fill="#a00000"/><rect x="9.00" y="13.00" width="2.05" height="2.05" fill="#00009a"/><rect x="11.00" y="13.00" width="2.05" height="2.05" fill="#9a9a9a"/><rect x="13.00" y="13.00" width="2.05" height="2.05" fill="#0b870b"/><rect x="15.00" y="13.00" width="2.05" height="2.05" fill="#000"/><rect x="17.00" y="13.00" width="2.05" height="2.05" fill="#a00000"/><rect x="19.00" y="13.00" width="2.05" height="2.05" fill="#00009a"/><rect x="21.00" y="13.00" width="2.05" height="2.05" fill="#9a9a9a"/><rect x="1.00" y="15.00" width="2.05" height="2.05" fill="#00009a"/><rect x="3.00" y="15.00" width="2.05" height="2.05" fill="#9a9a9a"/><rect x="5.00" y="15.00" width="2.05" height="2.05" fill="#0b870b"/><rect x="7.00" y="15.00" width="2.05" height="2.05" fill="#000"/><rect x="9.00" y="15.00" width="2.05" height="2.05" fill="#a00000"/><rect x="11.00" y="15.00" width="2.05" height="2.05" fill="#00009a"/><rect x="13.00" y="15.00" width="2.05" height="2.05" fill="#9a9a9a"/><rect x="15.00" y="15.00" width="2.05" height="2.05" fill="#0b870b"/><rect x="17.00" y="15.00" width="2.05" height="2.05" fill="#000"/><rect x="19.00" y="15.00" width="2.05" height="2.05" fill="#a00000"/><rect x="21.00" y="15.00" width="2.05" height="2.05" fill="#00009a"/><rect x="1.00" y="17.00" width="2.05" height="2.05" fill="#a00000"/><rect x="3.00" y="17.00" width="2.05" height="2.05" fill="#00009a"/><rect x="5.00" y="17.00" width="2.05" height="2.05" fill="#9a9a9a"/><rect x="7.00" y="17.00" width="2.05" height="2.05" fill="#0b870b"/><rect x="9.00" y="17.00" width="2.05" height="2.05" fill="#000"/><rect x="11.00" y="17.00" width="2.05" height="2.05" fill="#a00000"/><rect x="13.00" y="17.00" width="2.05" height="2.05" fill="#00009a"/><rect x="15.00" y="17.00" width="2.05" height="2.05" fill="#9a9a9a"/><rect x="17.00" y="17.00" width="2.05" height="2.05" fill="#0b870b"/><rect x="19.00" y="17.00" width="2.05" height="2.05" fill="#000"/><rect x="21.00" y="17.00" width="2.05" height="2.05" fill="#a00000"/><rect x="1.00" y="19.00" width="2.05" height="2.05" fill="#000"/><rect x="3.00" y="19.00" width="2.05" height="2.05" fill="#a00000"/><rect x="5.00" y="19.00" width="2.05" height="2.05" fill="#00009a"/><rect x="7.00" y="19.00" width="2.05" height="2.05" fill="#9a9a9a"/><rect x="9.00" y="19.00" width="2.05" height="2.05" fill="#0b870b"/><rect x="11.00" y="19.00" width="2.05" height="2.05" fill="#000"/><rect x="13.00" y="19.00" width="2.05" height="2.05" fill="#a00000"/><rect x="15.00" y="19.00" width="2.05" height="2.05" fill="#00009a"/><rect x="17.00" y="19.00" width="2.05" height="2.05" fill="#9a9a9a"/><rect x="19.00" y="19.00" width="2.05" height="2.05" fill="#0b870b"/><rect x="21.00" y="19.00" width="2.05" height="2.05" fill="#000"/><rect x="1.00" y="21.00" width="2.05" height="2.05" fill="#0b870b"/><rect x="3.00" y="21.00" width="2.05" height="2.05" fill="#000"/><rect x="5.00" y="21.00" width="2.05" height="2.05" fill="#a00000"/><rect x="7.00" y="21.00" width="2.05" height="2.05" fill="#00009a"/><rect x="9.00" y="21.00" width="2.05" height="2.05" fill="#9a9a9a"/><rect x="11.00" y="21.00" width="2.05" height="2.05" fill="#0b870b"/><rect x="13.00" y="21.00" width="2.05" height="2.05" fill="#000"/><rect x="15.00" y="21.00" width="2.05" height="2.05" fill="#a00000"/><rect x="17.00" y="21.00" width="2.05" height="2.05" fill="#00009a"/><rect x="19.00" y="21.00" width="2.05" height="2.05" fill="#9a9a9a"/><rect x="21.00" y="21.00" width="2.05" height="2.05" fill="#0b870b"/><defs><clipPath id="gclip"><circle cx="12" cy="12" r="10"/></clipPath></defs><circle cx="12" cy="12" r="10.3" fill="#000"/><g clip-path="url(#gclip)"><g transform="rotate(35 12 12)"><rect x="-3" y="-3" width="3" height="3" fill="#8a7048" opacity="0.85"/><rect x="3" y="-3" width="3" height="3" fill="#0a700a" opacity="0.85"/><rect x="9" y="-3" width="3" height="3" fill="#050505" opacity="0.85"/><rect x="15" y="-3" width="3" height="3" fill="#050505" opacity="0.85"/><rect x="21" y="-3" width="3" height="3" fill="#900000" opacity="0.85"/><rect x="0" y="0" width="3" height="3" fill="#00007a" opacity="0.85"/><rect x="6" y="0" width="3" height="3" fill="#8a7048" opacity="0.85"/><rect x="12" y="0" width="3" height="3" fill="#8a7048" opacity="0.85"/><rect x="18" y="0" width="3" height="3" fill="#0a700a" opacity="0.85"/><rect x="24" y="0" width="3" height="3" fill="#050505" opacity="0.85"/><rect x="-3" y="3" width="3" height="3" fill="#050505" opacity="0.85"/><rect x="3" y="3" width="3" height="3" fill="#050505" opacity="0.85"/><rect x="9" y="3" width="3" height="3" fill="#900000" opacity="0.85"/><rect x="15" y="3" width="3" height="3" fill="#00007a" opacity="0.85"/><rect x="21" y="3" width="3" height="3" fill="#8a7048" opacity="0.85"/><rect x="0" y="6" width="3" height="3" fill="#8a7048" opacity="0.85"/><rect x="6" y="6" width="3" height="3" fill="#0a700a" opacity="0.85"/><rect x="12" y="6" width="3" height="3" fill="#050505" opacity="0.85"/><rect x="18" y="6" width="3" height="3" fill="#050505" opacity="0.85"/><rect x="24" y="6" width="3" height="3" fill="#900000" opacity="0.85"/><rect x="-3" y="9" width="3" height="3" fill="#900000" opacity="0.85"/><rect x="3" y="9" width="3" height="3" fill="#00007a" opacity="0.85"/><rect x="9" y="9" width="3" height="3" fill="#8a7048" opacity="0.85"/><rect x="15" y="9" width="3" height="3" fill="#8a7048" opacity="0.85"/><rect x="21" y="9" width="3" height="3" fill="#0a700a" opacity="0.85"/><rect x="0" y="12" width="3" height="3" fill="#050505" opacity="0.85"/><rect x="6" y="12" width="3" height="3" fill="#050505" opacity="0.85"/><rect x="12" y="12" width="3" height="3" fill="#900000" opacity="0.85"/><rect x="18" y="12" width="3" height="3" fill="#00007a" opacity="0.85"/><rect x="24" y="12" width="3" height="3" fill="#8a7048" opacity="0.85"/><rect x="-3" y="15" width="3" height="3" fill="#8a7048" opacity="0.85"/><rect x="3" y="15" width="3" height="3" fill="#8a7048" opacity="0.85"/><rect x="9" y="15" width="3" height="3" fill="#0a700a" opacity="0.85"/><rect x="15" y="15" width="3" height="3" fill="#050505" opacity="0.85"/><rect x="21" y="15" width="3" height="3" fill="#050505" opacity="0.85"/><rect x="0" y="18" width="3" height="3" fill="#900000" opacity="0.85"/><rect x="6" y="18" width="3" height="3" fill="#00007a" opacity="0.85"/><rect x="12" y="18" width="3" height="3" fill="#8a7048" opacity="0.85"/><rect x="18" y="18" width="3" height="3" fill="#8a7048" opacity="0.85"/><rect x="24" y="18" width="3" height="3" fill="#0a700a" opacity="0.85"/><rect x="-3" y="21" width="3" height="3" fill="#0a700a" opacity="0.85"/><rect x="3" y="21" width="3" height="3" fill="#050505" opacity="0.85"/><rect x="9" y="21" width="3" height="3" fill="#050505" opacity="0.85"/><rect x="15" y="21" width="3" height="3" fill="#900000" opacity="0.85"/><rect x="21" y="21" width="3" height="3" fill="#00007a" opacity="0.85"/><rect x="0" y="24" width="3" height="3" fill="#8a7048" opacity="0.85"/><rect x="6" y="24" width="3" height="3" fill="#8a7048" opacity="0.85"/><rect x="12" y="24" width="3" height="3" fill="#0a700a" opacity="0.85"/><rect x="18" y="24" width="3" height="3" fill="#050505" opacity="0.85"/><rect x="24" y="24" width="3" height="3" fill="#050505" opacity="0.85"/></g></g><circle cx="12" cy="12" r="10" fill="none" stroke="#6a3010" stroke-width="1.2" opacity="0.8"/><circle cx="8.5" cy="9" r="1.8" fill="#fff"/><circle cx="17.5" cy="18.5" r="1.4" fill="#eee"/></svg></div>
<div class="a" style="left:27px;top:2px;font-size:8.5px;font-weight:bold;color:#fff;line-height:12px;white-space:nowrap">gold<br>VRayMtl</div>
<div class="a" style="left:85px;top:7px;width:7px;height:2px;background:#8aa0b3"></div>
<div class="lb" style="top:27.90px;height:13.40px;line-height:13.40px">漫反射贴图</div>
<div class="a" style="left:1px;top:40.10px;width:95px;height:1px;background:#98a1aa"></div>
<div class="a" style="left:1px;top:41.10px;width:95px;height:1px;background:#cdd4db"></div>
<div class="lb" style="top:41.30px;height:13.40px;line-height:13.40px">反射贴图</div>
<div class="a" style="left:1px;top:53.50px;width:95px;height:1px;background:#98a1aa"></div>
<div class="a" style="left:1px;top:54.50px;width:95px;height:1px;background:#cdd4db"></div>
<div class="lb" style="top:54.70px;height:13.40px;line-height:13.40px">折射贴图</div>
<div class="a" style="left:1px;top:66.90px;width:95px;height:1px;background:#98a1aa"></div>
<div class="a" style="left:1px;top:67.90px;width:95px;height:1px;background:#cdd4db"></div>
<div class="lb" style="top:68.10px;height:13.40px;line-height:13.40px">凹凸贴图</div>
<div class="a" style="left:1px;top:80.30px;width:95px;height:1px;background:#98a1aa"></div>
<div class="a" style="left:1px;top:81.30px;width:95px;height:1px;background:#cdd4db"></div>
<div class="lb" style="top:81.50px;height:13.40px;line-height:13.40px">反射光泽度</div>
<div class="a" style="left:1px;top:93.70px;width:95px;height:1px;background:#98a1aa"></div>
<div class="a" style="left:1px;top:94.70px;width:95px;height:1px;background:#cdd4db"></div>
<div class="lb" style="top:94.90px;height:13.40px;line-height:13.40px">折射光泽度</div>
<div class="a" style="left:1px;top:107.10px;width:95px;height:1px;background:#98a1aa"></div>
<div class="a" style="left:1px;top:108.10px;width:95px;height:1px;background:#cdd4db"></div>
<div class="lb" style="top:108.30px;height:13.40px;line-height:13.40px">置换</div>
<div class="a" style="left:1px;top:120.50px;width:95px;height:1px;background:#98a1aa"></div>
<div class="a" style="left:1px;top:121.50px;width:95px;height:1px;background:#cdd4db"></div>
<div class="lb" style="top:121.70px;height:13.40px;line-height:13.40px">环境</div>
<div class="a" style="left:1px;top:133.90px;width:95px;height:1px;background:#98a1aa"></div>
<div class="a" style="left:1px;top:134.90px;width:95px;height:1px;background:#cdd4db"></div>
<div class="lb" style="top:135.10px;height:13.40px;line-height:13.40px">半透明</div>
<div class="a" style="left:1px;top:147.30px;width:95px;height:1px;background:#98a1aa"></div>
<div class="a" style="left:1px;top:148.30px;width:95px;height:1px;background:#cdd4db"></div>
<div class="lb" style="top:148.50px;height:13.40px;line-height:13.40px">IOR</div>
<div class="a" style="left:1px;top:160.70px;width:95px;height:1px;background:#98a1aa"></div>
<div class="a" style="left:1px;top:161.70px;width:95px;height:1px;background:#cdd4db"></div>
<div class="lb" style="top:161.90px;height:13.40px;line-height:13.40px">高光光泽度</div>
<div class="a" style="left:1px;top:174.10px;width:95px;height:1px;background:#98a1aa"></div>
<div class="a" style="left:1px;top:175.10px;width:95px;height:1px;background:#cdd4db"></div>
<div class="lb" style="top:175.30px;height:13.40px;line-height:13.40px">菲涅耳折射率(IOR)</div>
<div class="a" style="left:1px;top:187.50px;width:95px;height:1px;background:#98a1aa"></div>
<div class="a" style="left:1px;top:188.50px;width:95px;height:1px;background:#cdd4db"></div>
<div class="lb" style="top:188.70px;height:13.40px;line-height:13.40px">不透明</div>
<div class="a" style="left:1px;top:200.90px;width:95px;height:1px;background:#98a1aa"></div>
<div class="a" style="left:1px;top:201.90px;width:95px;height:1px;background:#cdd4db"></div>
<div class="lb" style="top:202.10px;height:13.40px;line-height:13.40px">粗糙度</div>
<div class="a" style="left:1px;top:214.30px;width:95px;height:1px;background:#98a1aa"></div>
<div class="a" style="left:1px;top:215.30px;width:95px;height:1px;background:#cdd4db"></div>
<div class="lb" style="top:215.50px;height:13.40px;line-height:13.40px">各向异性</div>
<div class="a" style="left:1px;top:227.70px;width:95px;height:1px;background:#98a1aa"></div>
<div class="a" style="left:1px;top:228.70px;width:95px;height:1px;background:#cdd4db"></div>
<div class="lb" style="top:228.90px;height:13.40px;line-height:13.40px">各向异性旋转</div>
<div class="a" style="left:1px;top:241.10px;width:95px;height:1px;background:#98a1aa"></div>
<div class="a" style="left:1px;top:242.10px;width:95px;height:1px;background:#cdd4db"></div>
<div class="lb" style="top:242.30px;height:13.40px;line-height:13.40px">雾颜色</div>
<div class="a" style="left:1px;top:254.50px;width:95px;height:1px;background:#98a1aa"></div>
<div class="a" style="left:1px;top:255.50px;width:95px;height:1px;background:#cdd4db"></div>
<div class="lb" style="top:255.70px;height:13.40px;line-height:13.40px">自发光</div>
<div class="a" style="left:0;top:270.00px;width:97px;height:1px;background:#98a1aa"></div>
<div class="a" style="left:0;top:271.00px;width:97px;height:1px;background:#d2d8de"></div>
<div class="a" style="left:0;top:272.00px;width:97px;height:5.7px;background:linear-gradient(#a6aeb7,#cdd3d9)"></div>
<div class="a" style="left:31.5px;top:270.70px;font-size:7.8px;font-weight:bold;line-height:10px;color:#333344;white-space:nowrap">mr 连接</div>
<svg class="a" style="left:87.5px;top:272.20px" width="6" height="6"><path d="M3 0.5 V5.5 M0.5 3 H5.5" stroke="#7a858f" stroke-width="1.6"/></svg>
<div class="a" style="left:0;top:277.70px;width:97px;height:1px;background:#e0e5e9"></div>
<div class="a" style="left:0;top:278.70px;width:97px;height:9px;background:linear-gradient(#a8b1b9,#bcc3ca 45%,#9ea7af)"></div>
</div>
<svg class="a" style="left:706.5px;top:685.0px" width="7" height="7"><path d="M7 0 L7 7 L0 7 Z" fill="#434343"/><path d="M6.3 0.5 L0.5 6.3" stroke="#eef1f3" stroke-width="1.4"/></svg>
<svg class="a" style="left:701px;top:684.0px" width="9" height="6"><path d="M2 5 L6 1 M4.5 5 L8.5 1" stroke="#6e7880" stroke-width="0.8" stroke-dasharray="1 0.8"/></svg>
<div class="sk" style="left:609px;top:434.10px"></div>
<div class="sk" style="left:609px;top:447.50px"></div>
<div class="sk" style="left:609px;top:460.90px"></div>
<div class="sk" style="left:609px;top:474.30px"></div>
<div class="sk" style="left:609px;top:487.70px"></div>
<div class="sk" style="left:609px;top:501.10px"></div>
<div class="sk" style="left:609px;top:514.50px"></div>
<div class="sk" style="left:609px;top:527.90px"></div>
<div class="sk" style="left:609px;top:541.30px"></div>
<div class="sk" style="left:609px;top:554.70px"></div>
<div class="sk" style="left:609px;top:568.10px"></div>
<div class="sk" style="left:609px;top:581.50px"></div>
<div class="sk" style="left:609px;top:594.90px"></div>
<div class="sk" style="left:609px;top:608.30px"></div>
<div class="sk" style="left:609px;top:621.70px"></div>
<div class="sk" style="left:609px;top:635.10px"></div>
<div class="sk" style="left:609px;top:648.50px"></div>
<div class="sk" style="left:609px;top:661.90px"></div>
<div class="sky" style="left:714px;top:542.5px"></div>
<div class="a" style="left:711px;top:759px;width:8px;height:93px;background:#2e8a4e;border:1px solid #e6eaee;border-left:none;border-radius:0 4px 4px 0"></div>
<div class="a" style="left:613px;top:713px;width:100px;height:184.4px;background:#b3bcc5;border:1.5px solid #eef1f3;border-radius:2px 5px 2px 4px;overflow:hidden">
<div class="a" style="left:0;top:0;width:97px;height:27px;background:linear-gradient(126.5deg,#800000 0%,#800000 49.1%,#2e6b44 49.1%);border-radius:1px 4px 0 0"></div>
<div class="a" style="left:2px;top:1.5px;width:24px;height:24px"><svg width="24" height="24" viewBox="0 0 24 24" style="position:absolute;left:0;top:0;width:23px;height:23px"><rect x="0.5" y="0.5" width="23" height="23" fill="#3a3a3a" stroke="#e0e0e0" stroke-width="1"/><rect x="1" y="1" width="22" height="22" fill="#000"/><rect x="1" y="16.5" width="22" height="2.5" fill="#555"/><rect x="1" y="20.5" width="22" height="1.5" fill="#777"/></svg></div>
<div class="a" style="left:27px;top:2px;font-size:8.5px;font-weight:bold;color:#fff;line-height:12px;white-space:nowrap">Map #30<br>Gradient...</div>
<div class="a" style="left:85px;top:7px;width:7px;height:2px;background:#8aa0b3"></div>
<div class="lb" style="top:27.90px;height:13.40px;line-height:13.40px">Flag #1: 纹理</div>
<div class="a" style="left:1px;top:40.10px;width:95px;height:1px;background:#98a1aa"></div>
<div class="a" style="left:1px;top:41.10px;width:95px;height:1px;background:#cdd4db"></div>
<div class="lb" style="top:41.30px;height:13.40px;line-height:13.40px">Flag #2: 纹理</div>
<div class="a" style="left:1px;top:53.50px;width:95px;height:1px;background:#98a1aa"></div>
<div class="a" style="left:1px;top:54.50px;width:95px;height:1px;background:#cdd4db"></div>
<div class="lb" style="top:54.70px;height:13.40px;line-height:13.40px">Flag #3: 纹理</div>
<div class="a" style="left:1px;top:66.90px;width:95px;height:1px;background:#98a1aa"></div>
<div class="a" style="left:1px;top:67.90px;width:95px;height:1px;background:#cdd4db"></div>
<div class="lb" style="top:68.10px;height:13.40px;line-height:13.40px">Flag #4: 纹理</div>
<div class="a" style="left:1px;top:80.30px;width:95px;height:1px;background:#98a1aa"></div>
<div class="a" style="left:1px;top:81.30px;width:95px;height:1px;background:#cdd4db"></div>
<div class="lb" style="top:81.50px;height:13.40px;line-height:13.40px">Flag #5: 纹理</div>
<div class="a" style="left:1px;top:93.70px;width:95px;height:1px;background:#98a1aa"></div>
<div class="a" style="left:1px;top:94.70px;width:95px;height:1px;background:#cdd4db"></div>
<div class="lb" style="top:94.90px;height:13.40px;line-height:13.40px">Flag #6: 纹理</div>
<div class="a" style="left:1px;top:107.10px;width:95px;height:1px;background:#98a1aa"></div>
<div class="a" style="left:1px;top:108.10px;width:95px;height:1px;background:#cdd4db"></div>
<div class="lb" style="top:108.30px;height:13.40px;line-height:13.40px">Flag #7: 纹理</div>
<div class="a" style="left:1px;top:120.50px;width:95px;height:1px;background:#98a1aa"></div>
<div class="a" style="left:1px;top:121.50px;width:95px;height:1px;background:#cdd4db"></div>
<div class="lb" style="top:121.70px;height:13.40px;line-height:13.40px">Flag #8: 纹理</div>
<div class="a" style="left:1px;top:133.90px;width:95px;height:1px;background:#98a1aa"></div>
<div class="a" style="left:1px;top:134.90px;width:95px;height:1px;background:#cdd4db"></div>
<div class="lb" style="top:135.10px;height:13.40px;line-height:13.40px">Flag #9: 纹理</div>
<div class="a" style="left:1px;top:147.30px;width:95px;height:1px;background:#98a1aa"></div>
<div class="a" style="left:1px;top:148.30px;width:95px;height:1px;background:#cdd4db"></div>
<div class="lb" style="top:148.50px;height:13.40px;line-height:13.40px">Flag #10: 纹理</div>
<div class="a" style="left:1px;top:160.70px;width:95px;height:1px;background:#98a1aa"></div>
<div class="a" style="left:1px;top:161.70px;width:95px;height:1px;background:#cdd4db"></div>
<div class="lb" style="top:161.90px;height:13.40px;line-height:13.40px">源贴图</div>
<div class="a" style="left:1px;top:174.10px;width:95px;height:1px;background:#98a1aa"></div>
<div class="a" style="left:1px;top:175.10px;width:95px;height:1px;background:#cdd4db"></div>
<div class="a" style="left:0;top:176.10px;width:97px;height:9px;background:linear-gradient(#a8b1b9,#bcc3ca 45%,#9ea7af)"></div>
</div>
<svg class="a" style="left:706.5px;top:890.9px" width="7" height="7"><path d="M7 0 L7 7 L0 7 Z" fill="#434343"/><path d="M6.3 0.5 L0.5 6.3" stroke="#eef1f3" stroke-width="1.4"/></svg>
<svg class="a" style="left:701px;top:889.9px" width="9" height="6"><path d="M2 5 L6 1 M4.5 5 L8.5 1" stroke="#6e7880" stroke-width="0.8" stroke-dasharray="1 0.8"/></svg>
<div class="sk" style="left:609px;top:744.10px"></div>
<div class="sk" style="left:609px;top:757.50px"></div>
<div class="sk" style="left:609px;top:770.90px"></div>
<div class="sk" style="left:609px;top:784.30px"></div>
<div class="sk" style="left:609px;top:797.70px"></div>
<div class="sk" style="left:609px;top:811.10px"></div>
<div class="sk" style="left:609px;top:824.50px"></div>
<div class="sk" style="left:609px;top:837.90px"></div>
<div class="sk" style="left:609px;top:851.30px"></div>
<div class="sk" style="left:609px;top:864.70px"></div>
<div class="sk" style="left:609px;top:878.10px"></div>
<div class="sky" style="left:714px;top:800.5px"></div>
<div class="a" style="left:894px;top:496px;width:8px;height:273px;background:#3c6a8c;border:1px solid #e6eaee;border-left:none;border-radius:0 4px 4px 0"></div>
<div class="a" style="left:796px;top:361px;width:100px;height:543.1px;background:#b3bcc5;border:1.5px solid #eef1f3;border-radius:2px 5px 2px 4px;overflow:hidden">
<div class="a" style="left:0;top:0;width:97px;height:27px;background:linear-gradient(#2d526d,#33607d);border-radius:1px 4px 0 0"></div>
<div class="a" style="left:2px;top:1.5px;width:24px;height:24px"><svg width="24" height="24" viewBox="0 0 24 24" style="position:absolute;left:0;top:0;width:23px;height:23px"><rect x="0.5" y="0.5" width="23" height="23" fill="#3a3a3a" stroke="#e0e0e0" stroke-width="1"/><circle cx="12" cy="12" r="10.6" fill="#170800"/><circle cx="8" cy="8" r="2" fill="#ff6a00" opacity="0.9"/><ellipse cx="16.5" cy="16.5" rx="2.6" ry="1.3" transform="rotate(-40 16.5 16.5)" fill="#ff8c10"/></svg></div>
<div class="a" style="left:27px;top:2px;font-size:8.5px;font-weight:bold;color:#fff;line-height:12px;white-space:nowrap"><span style="letter-spacing:1.4px">网瘾小阿</span>...<br>VR-<span style="letter-spacing:1px">混合</span>...</div>
<div class="a" style="left:85px;top:7px;width:7px;height:2px;background:#8aa0b3"></div>
<div class="lb" style="top:27.90px;height:13.40px;line-height:13.40px">基础</div>
<div class="a" style="left:1px;top:40.10px;width:95px;height:1px;background:#98a1aa"></div>
<div class="a" style="left:1px;top:41.10px;width:95px;height:1px;background:#cdd4db"></div>
<div class="lb" style="top:41.30px;height:13.40px;line-height:13.40px">镀膜 1</div>
<div class="a" style="left:1px;top:53.50px;width:95px;height:1px;background:#98a1aa"></div>
<div class="a" style="left:1px;top:54.50px;width:95px;height:1px;background:#cdd4db"></div>
<div class="lb" style="top:54.70px;height:13.40px;line-height:13.40px">镀膜 2</div>
<div class="a" style="left:1px;top:66.90px;width:95px;height:1px;background:#98a1aa"></div>
<div class="a" style="left:1px;top:67.90px;width:95px;height:1px;background:#cdd4db"></div>
<div class="lb" style="top:68.10px;height:13.40px;line-height:13.40px">镀膜 3</div>
<div class="a" style="left:1px;top:80.30px;width:95px;height:1px;background:#98a1aa"></div>
<div class="a" style="left:1px;top:81.30px;width:95px;height:1px;background:#cdd4db"></div>
<div class="lb" style="top:81.50px;height:13.40px;line-height:13.40px">镀膜 4</div>
<div class="a" style="left:1px;top:93.70px;width:95px;height:1px;background:#98a1aa"></div>
<div class="a" style="left:1px;top:94.70px;width:95px;height:1px;background:#cdd4db"></div>
<div class="lb" style="top:94.90px;height:13.40px;line-height:13.40px">镀膜 5</div>
<div class="a" style="left:1px;top:107.10px;width:95px;height:1px;background:#98a1aa"></div>
<div class="a" style="left:1px;top:108.10px;width:95px;height:1px;background:#cdd4db"></div>
<div class="lb" style="top:108.30px;height:13.40px;line-height:13.40px">镀膜 6</div>
<div class="a" style="left:1px;top:120.50px;width:95px;height:1px;background:#98a1aa"></div>
<div class="a" style="left:1px;top:121.50px;width:95px;height:1px;background:#cdd4db"></div>
<div class="lb" style="top:121.70px;height:13.40px;line-height:13.40px">镀膜 7</div>
<div class="a" style="left:1px;top:133.90px;width:95px;height:1px;background:#98a1aa"></div>
<div class="a" style="left:1px;top:134.90px;width:95px;height:1px;background:#cdd4db"></div>
<div class="lb" style="top:135.10px;height:13.40px;line-height:13.40px">镀膜 8</div>
<div class="a" style="left:1px;top:147.30px;width:95px;height:1px;background:#98a1aa"></div>
<div class="a" style="left:1px;top:148.30px;width:95px;height:1px;background:#cdd4db"></div>
<div class="lb" style="top:148.50px;height:13.40px;line-height:13.40px">镀膜 9</div>
<div class="a" style="left:1px;top:160.70px;width:95px;height:1px;background:#98a1aa"></div>
<div class="a" style="left:1px;top:161.70px;width:95px;height:1px;background:#cdd4db"></div>
<div class="lb" style="top:161.90px;height:13.40px;line-height:13.40px">重复镀膜 1</div>
<div class="a" style="left:1px;top:174.10px;width:95px;height:1px;background:#98a1aa"></div>
<div class="a" style="left:1px;top:175.10px;width:95px;height:1px;background:#cdd4db"></div>
<div class="lb" style="top:175.30px;height:13.40px;line-height:13.40px">重复镀膜 2</div>
<div class="a" style="left:1px;top:187.50px;width:95px;height:1px;background:#98a1aa"></div>
<div class="a" style="left:1px;top:188.50px;width:95px;height:1px;background:#cdd4db"></div>
<div class="lb" style="top:188.70px;height:13.40px;line-height:13.40px">重复镀膜 3</div>
<div class="a" style="left:1px;top:200.90px;width:95px;height:1px;background:#98a1aa"></div>
<div class="a" style="left:1px;top:201.90px;width:95px;height:1px;background:#cdd4db"></div>
<div class="lb" style="top:202.10px;height:13.40px;line-height:13.40px">重复镀膜 4</div>
<div class="a" style="left:1px;top:214.30px;width:95px;height:1px;background:#98a1aa"></div>
<div class="a" style="left:1px;top:215.30px;width:95px;height:1px;background:#cdd4db"></div>
<div class="lb" style="top:215.50px;height:13.40px;line-height:13.40px">重复镀膜 5</div>
<div class="a" style="left:1px;top:227.70px;width:95px;height:1px;background:#98a1aa"></div>
<div class="a" style="left:1px;top:228.70px;width:95px;height:1px;background:#cdd4db"></div>
<div class="lb" style="top:228.90px;height:13.40px;line-height:13.40px">重复镀膜 6</div>
<div class="a" style="left:1px;top:241.10px;width:95px;height:1px;background:#98a1aa"></div>
<div class="a" style="left:1px;top:242.10px;width:95px;height:1px;background:#cdd4db"></div>
<div class="lb" style="top:242.30px;height:13.40px;line-height:13.40px">重复镀膜 7</div>
<div class="a" style="left:1px;top:254.50px;width:95px;height:1px;background:#98a1aa"></div>
<div class="a" style="left:1px;top:255.50px;width:95px;height:1px;background:#cdd4db"></div>
<div class="lb" style="top:255.70px;height:13.40px;line-height:13.40px">重复镀膜 8</div>
<div class="a" style="left:1px;top:267.90px;width:95px;height:1px;background:#98a1aa"></div>
<div class="a" style="left:1px;top:268.90px;width:95px;height:1px;background:#cdd4db"></div>
<div class="lb" style="top:269.10px;height:13.40px;line-height:13.40px">重复镀膜 9</div>
<div class="a" style="left:1px;top:281.30px;width:95px;height:1px;background:#98a1aa"></div>
<div class="a" style="left:1px;top:282.30px;width:95px;height:1px;background:#cdd4db"></div>
<div class="lb" style="top:282.50px;height:13.40px;line-height:13.40px">混合 1</div>
<div class="a" style="left:1px;top:294.70px;width:95px;height:1px;background:#98a1aa"></div>
<div class="a" style="left:1px;top:295.70px;width:95px;height:1px;background:#cdd4db"></div>
<div class="lb" style="top:295.90px;height:13.40px;line-height:13.40px">混合 2</div>
<div class="a" style="left:1px;top:308.10px;width:95px;height:1px;background:#98a1aa"></div>
<div class="a" style="left:1px;top:309.10px;width:95px;height:1px;background:#cdd4db"></div>
<div class="lb" style="top:309.30px;height:13.40px;line-height:13.40px">混合 3</div>
<div class="a" style="left:1px;top:321.50px;width:95px;height:1px;background:#98a1aa"></div>
<div class="a" style="left:1px;top:322.50px;width:95px;height:1px;background:#cdd4db"></div>
<div class="lb" style="top:322.70px;height:13.40px;line-height:13.40px">混合 4</div>
<div class="a" style="left:1px;top:334.90px;width:95px;height:1px;background:#98a1aa"></div>
<div class="a" style="left:1px;top:335.90px;width:95px;height:1px;background:#cdd4db"></div>
<div class="lb" style="top:336.10px;height:13.40px;line-height:13.40px">混合 5</div>
<div class="a" style="left:1px;top:348.30px;width:95px;height:1px;background:#98a1aa"></div>
<div class="a" style="left:1px;top:349.30px;width:95px;height:1px;background:#cdd4db"></div>
<div class="lb" style="top:349.50px;height:13.40px;line-height:13.40px">混合 6</div>
<div class="a" style="left:1px;top:361.70px;width:95px;height:1px;background:#98a1aa"></div>
<div class="a" style="left:1px;top:362.70px;width:95px;height:1px;background:#cdd4db"></div>
<div class="lb" style="top:362.90px;height:13.40px;line-height:13.40px">混合 7</div>
<div class="a" style="left:1px;top:375.10px;width:95px;height:1px;background:#98a1aa"></div>
<div class="a" style="left:1px;top:376.10px;width:95px;height:1px;background:#cdd4db"></div>
<div class="lb" style="top:376.30px;height:13.40px;line-height:13.40px">混合 8</div>
<div class="a" style="left:1px;top:388.50px;width:95px;height:1px;background:#98a1aa"></div>
<div class="a" style="left:1px;top:389.50px;width:95px;height:1px;background:#cdd4db"></div>
<div class="lb" style="top:389.70px;height:13.40px;line-height:13.40px">混合 9</div>
<div class="a" style="left:1px;top:401.90px;width:95px;height:1px;background:#98a1aa"></div>
<div class="a" style="left:1px;top:402.90px;width:95px;height:1px;background:#cdd4db"></div>
<div class="lb" style="top:403.10px;height:13.40px;line-height:13.40px">重复混合 1</div>
<div class="a" style="left:1px;top:415.30px;width:95px;height:1px;background:#98a1aa"></div>
<div class="a" style="left:1px;top:416.30px;width:95px;height:1px;background:#cdd4db"></div>
<div class="lb" style="top:416.50px;height:13.40px;line-height:13.40px">重复混合 2</div>
<div class="a" style="left:1px;top:428.70px;width:95px;height:1px;background:#98a1aa"></div>
<div class="a" style="left:1px;top:429.70px;width:95px;height:1px;background:#cdd4db"></div>
<div class="lb" style="top:429.90px;height:13.40px;line-height:13.40px">重复混合 3</div>
<div class="a" style="left:1px;top:442.10px;width:95px;height:1px;background:#98a1aa"></div>
<div class="a" style="left:1px;top:443.10px;width:95px;height:1px;background:#cdd4db"></div>
<div class="lb" style="top:443.30px;height:13.40px;line-height:13.40px">重复混合 4</div>
<div class="a" style="left:1px;top:455.50px;width:95px;height:1px;background:#98a1aa"></div>
<div class="a" style="left:1px;top:456.50px;width:95px;height:1px;background:#cdd4db"></div>
<div class="lb" style="top:456.70px;height:13.40px;line-height:13.40px">重复混合 5</div>
<div class="a" style="left:1px;top:468.90px;width:95px;height:1px;background:#98a1aa"></div>
<div class="a" style="left:1px;top:469.90px;width:95px;height:1px;background:#cdd4db"></div>
<div class="lb" style="top:470.10px;height:13.40px;line-height:13.40px">重复混合 6</div>
<div class="a" style="left:1px;top:482.30px;width:95px;height:1px;background:#98a1aa"></div>
<div class="a" style="left:1px;top:483.30px;width:95px;height:1px;background:#cdd4db"></div>
<div class="lb" style="top:483.50px;height:13.40px;line-height:13.40px">重复混合 7</div>
<div class="a" style="left:1px;top:495.70px;width:95px;height:1px;background:#98a1aa"></div>
<div class="a" style="left:1px;top:496.70px;width:95px;height:1px;background:#cdd4db"></div>
<div class="lb" style="top:496.90px;height:13.40px;line-height:13.40px">重复混合 8</div>
<div class="a" style="left:1px;top:509.10px;width:95px;height:1px;background:#98a1aa"></div>
<div class="a" style="left:1px;top:510.10px;width:95px;height:1px;background:#cdd4db"></div>
<div class="lb" style="top:510.30px;height:13.40px;line-height:13.40px">重复混合 9</div>
<div class="a" style="left:0;top:524.60px;width:97px;height:1px;background:#98a1aa"></div>
<div class="a" style="left:0;top:525.60px;width:97px;height:1px;background:#d2d8de"></div>
<div class="a" style="left:0;top:526.60px;width:97px;height:5.7px;background:linear-gradient(#a6aeb7,#cdd3d9)"></div>
<div class="a" style="left:31.5px;top:525.30px;font-size:7.8px;font-weight:bold;line-height:10px;color:#333344;white-space:nowrap">mr 连接</div>
<svg class="a" style="left:87.5px;top:526.80px" width="6" height="6"><path d="M3 0.5 V5.5 M0.5 3 H5.5" stroke="#7a858f" stroke-width="1.6"/></svg>
<div class="a" style="left:0;top:532.30px;width:97px;height:1px;background:#e0e5e9"></div>
<div class="a" style="left:0;top:533.30px;width:97px;height:9px;background:linear-gradient(#a8b1b9,#bcc3ca 45%,#9ea7af)"></div>
</div>
<svg class="a" style="left:889.5px;top:897.6px" width="7" height="7"><path d="M7 0 L7 7 L0 7 Z" fill="#434343"/><path d="M6.3 0.5 L0.5 6.3" stroke="#eef1f3" stroke-width="1.4"/></svg>
<svg class="a" style="left:884px;top:896.6px" width="9" height="6"><path d="M2 5 L6 1 M4.5 5 L8.5 1" stroke="#6e7880" stroke-width="0.8" stroke-dasharray="1 0.8"/></svg>
<div class="sky" style="left:792px;top:392.10px"></div>
<div class="sky" style="left:792px;top:405.50px"></div>
<div class="sk" style="left:792px;top:418.90px"></div>
<div class="sk" style="left:792px;top:432.30px"></div>
<div class="sk" style="left:792px;top:445.70px"></div>
<div class="sk" style="left:792px;top:459.10px"></div>
<div class="sk" style="left:792px;top:472.50px"></div>
<div class="sk" style="left:792px;top:485.90px"></div>
<div class="sk" style="left:792px;top:499.30px"></div>
<div class="sk" style="left:792px;top:512.70px"></div>
<div class="sky" style="left:792px;top:526.10px"></div>
<div class="sk" style="left:792px;top:539.50px"></div>
<div class="sk" style="left:792px;top:552.90px"></div>
<div class="sk" style="left:792px;top:566.30px"></div>
<div class="sk" style="left:792px;top:579.70px"></div>
<div class="sk" style="left:792px;top:593.10px"></div>
<div class="sk" style="left:792px;top:606.50px"></div>
<div class="sk" style="left:792px;top:619.90px"></div>
<div class="sk" style="left:792px;top:633.30px"></div>
<div class="sky" style="left:792px;top:646.70px"></div>
<div class="sk" style="left:792px;top:660.10px"></div>
<div class="sk" style="left:792px;top:673.50px"></div>
<div class="sk" style="left:792px;top:686.90px"></div>
<div class="sk" style="left:792px;top:700.30px"></div>
<div class="sk" style="left:792px;top:713.70px"></div>
<div class="sk" style="left:792px;top:727.10px"></div>
<div class="sk" style="left:792px;top:740.50px"></div>
<div class="sk" style="left:792px;top:753.90px"></div>
<div class="sky" style="left:792px;top:767.30px"></div>
<div class="sk" style="left:792px;top:780.70px"></div>
<div class="sk" style="left:792px;top:794.10px"></div>
<div class="sk" style="left:792px;top:807.50px"></div>
<div class="sk" style="left:792px;top:820.90px"></div>
<div class="sk" style="left:792px;top:834.30px"></div>
<div class="sk" style="left:792px;top:847.70px"></div>
<div class="sk" style="left:792px;top:861.10px"></div>
<div class="sk" style="left:792px;top:874.50px"></div>
<div class="sk" style="left:897px;top:627.5px"></div>
<svg class="a" style="left:0;top:0" width="1197" height="939"><path d="M724 237.5 C739 237.5 777 397.1 792 397.1 M724 547.5 C739 547.5 777 410.5 792 410.5 M724 547.5 C739 547.5 777 531.1 792 531.1 M724 805.5 C739 805.5 777 651.7 792 651.7 M724 805.5 C739 805.5 777 772.3 792 772.3" stroke="#f4f4f4" stroke-width="1.3" fill="none"/><rect x="546.5" y="688.5" width="202" height="238" fill="none" stroke="#ff3b3b" stroke-width="1"/><path d="M161.3 486.3 L179.1 483 L178 486.8 L325.4 538.6 L176.3 495.3 L174.5 498 Z" fill="#ff3636"/></svg>
</body></html>
